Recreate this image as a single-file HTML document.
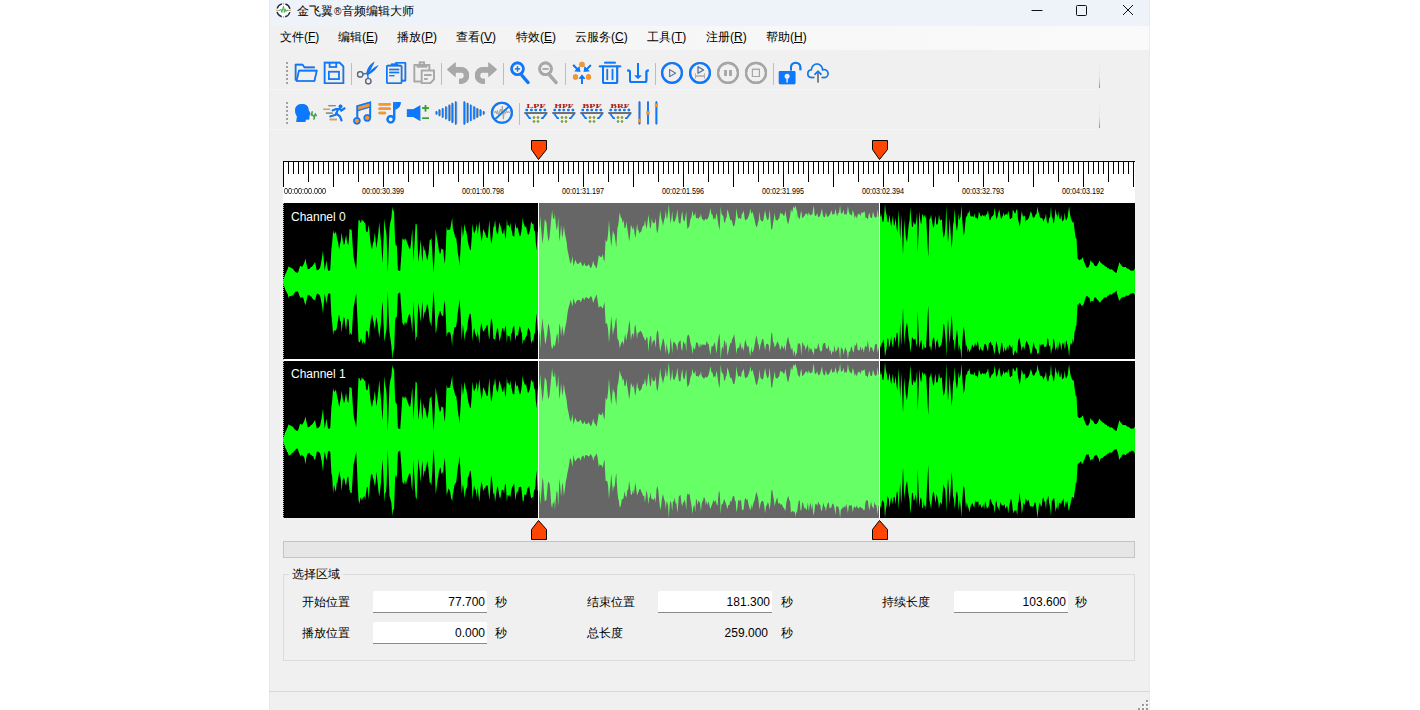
<!DOCTYPE html>
<html><head><meta charset="utf-8">
<style>
*{box-sizing:border-box;margin:0;padding:0}
html,body{width:1420px;height:710px;overflow:hidden;background:#fff;font-family:"Liberation Sans",sans-serif;color:#000}
.a{position:absolute}
#win{position:absolute;left:269px;top:0;width:881px;height:710px;background:#f0f0f0;overflow:hidden}
#title{position:absolute;left:269px;top:0;width:881px;height:26px;background:#eef3fa}
#menu{position:absolute;left:269px;top:26px;width:881px;height:24px;background:linear-gradient(to right,#f0f0f0,#f6f6f6 40%,#fafafa)}
.t12{font-size:12px;line-height:14px;white-space:nowrap}
.mi{position:absolute;top:30px;font-size:12px;line-height:14px;white-space:nowrap}
.mi u{text-decoration:underline;text-underline-offset:1px}
.rl{position:absolute;top:187px;font-size:9px;line-height:9px;white-space:nowrap;color:#000;transform-origin:0 0;transform:scaleX(0.8)}
.rl.c{transform:translateX(-50%) scaleX(0.8);transform-origin:50% 0}
.sep{position:absolute;width:1px;background:#c8c8c8}
.lbl{position:absolute;font-size:12px;line-height:14px;white-space:nowrap}
.inp{position:absolute;height:22px;background:#fff;border-bottom:1px solid #8a8a8a;font-size:12px;line-height:23px;text-align:right;padding-right:2px;border-radius:2px 2px 0 0}
svg{position:absolute;overflow:visible}
</style></head><body>
<div id="win"></div>
<div id="title"></div>
<div id="menu"></div>

<div class="a" style="left:269px;top:0;width:1px;height:26px;background:#e6eaf1"></div>
<div class="a" style="left:269px;top:26px;width:1px;height:684px;background:#e8e8e8"></div>
<div class="a" style="left:1149px;top:0;width:1px;height:26px;background:#e6eaf1"></div>
<div class="a" style="left:1149px;top:26px;width:1px;height:684px;background:#ececec"></div>
<!-- title bar -->
<svg class="a" style="left:275px;top:2px" width="17" height="17" viewBox="0 0 17 17">
  <circle cx="8.5" cy="8.35" r="6.6" fill="#fff" stroke="#2a2456" stroke-width="1.4" stroke-dasharray="6.87 3.5" stroke-dashoffset="8.62"/>
  <rect x="7.9" y="1" width="1.2" height="1.8" fill="#f7a040"/>
  <rect x="7.9" y="14" width="1.2" height="1.8" fill="#f7a040"/>
  <rect x="1.1" y="7.75" width="1.8" height="1.2" fill="#f7a040"/>
  <rect x="14.1" y="7.75" width="1.8" height="1.2" fill="#f7a040"/>
  <path d="M3.3,8.35H5.2L6,7.2L6.8,10.4L7.7,6.8L8.5,4.2L9.3,10.4L10.2,6.8L11,9.6L11.8,8.35H13.7" fill="none" stroke="#3cb04a" stroke-width="1" stroke-linejoin="round"/>
</svg>
<div class="a t12" style="left:297px;top:4px">金飞翼<span style="font-size:10px;margin:0 1px">®</span>音频编辑大师</div>
<svg style="left:1020px;top:0" width="130" height="26">
  <path d="M11.5,10.5H22.5" stroke="#111" stroke-width="1" fill="none"/>
  <rect x="56.5" y="5.5" width="10" height="10" rx="1" stroke="#111" stroke-width="1" fill="none"/>
  <path d="M103,5L113,15M113,5L103,15" stroke="#111" stroke-width="1" fill="none"/>
</svg>

<!-- menu -->
<div class="mi" style="left:280px">文件(<u>F</u>)</div>
<div class="mi" style="left:338px">编辑(<u>E</u>)</div>
<div class="mi" style="left:397px">播放(<u>P</u>)</div>
<div class="mi" style="left:456px">查看(<u>V</u>)</div>
<div class="mi" style="left:516px">特效(<u>E</u>)</div>
<div class="mi" style="left:575px">云服务(<u>C</u>)</div>
<div class="mi" style="left:647px">工具(<u>T</u>)</div>
<div class="mi" style="left:706px">注册(<u>R</u>)</div>
<div class="mi" style="left:766px">帮助(<u>H</u>)</div>

<!-- TOOLBAR -->
<svg style="left:0;top:0;filter:drop-shadow(0.6px 0.6px 0 rgba(90,80,70,0.55))" width="1420" height="140" viewBox="0 0 1420 140">
<defs>
  <g id="grip" fill="#a0a0a0"><rect x="286" y="0" width="2" height="2"/><rect x="286" y="4" width="2" height="2"/><rect x="286" y="8" width="2" height="2"/><rect x="286" y="12" width="2" height="2"/><rect x="286" y="16" width="2" height="2"/><rect x="286" y="20" width="2" height="2"/></g>
  <g id="filt">
    <g fill="#0a78ff"><circle cx="526.8" cy="110" r="1.35"/><circle cx="531.4" cy="110" r="1.35"/><circle cx="535.8" cy="110" r="1.35"/><circle cx="540.3" cy="110" r="1.35"/><circle cx="544.9" cy="110" r="1.35"/></g>
    <path d="M524.4,113H547.3" stroke="#707070" stroke-width="2"/>
    <path d="M526,113.4L529.5,118.3H531M546.4,113.4L542.7,118.3H541" stroke="#0a78ff" stroke-width="1.6" fill="none"/>
    <g fill="#7ea82a"><circle cx="534" cy="117.5" r="1.2"/><circle cx="538" cy="117.5" r="1.2"/><circle cx="534" cy="121.4" r="1.2"/><circle cx="538" cy="121.4" r="1.2"/></g>
  </g>
</defs>
<!-- row separators/lines -->
<linearGradient id="eg" x1="0" y1="0" x2="0" y2="1"><stop offset="0" stop-color="#f0f0f0"/><stop offset="0.6" stop-color="#e4e4e4"/><stop offset="1" stop-color="#909090"/></linearGradient>
<path d="M269,89.5H1098M269,129.5H1098" stroke="#f4f4f4" stroke-width="1"/>
<rect x="1099" y="61" width="1" height="27" fill="url(#eg)"/><rect x="1099" y="101" width="1" height="27" fill="url(#eg)"/>
<use href="#grip" y="62"/>
<use href="#grip" y="102"/>
<!-- separators row1 -->
<g stroke="#bdbdbd" stroke-width="1">
  <path d="M351.5,63V85M441.5,63V85M503.5,63V85M565.5,63V85M655.5,63V85M773.5,63V85M519.5,103V125"/>
</g>
<!-- folder -->
<g fill="none" stroke="#0a78ff" stroke-width="1.6" stroke-linejoin="round">
  <path d="M295.6,80.6V64.6H302.4L304.6,67.4H314.8"/>
  <path d="M298.9,70.6H316.8L314.4,81H296.6Z"/>
</g>
<!-- save -->
<g fill="none" stroke="#0a78ff" stroke-width="1.6" stroke-linejoin="miter">
  <path d="M324.6,62.6H339.6L343.4,66.4V83.2H324.6Z"/>
  <path d="M329.6,63V67H336.3V63"/>
  <rect x="328.8" y="71.7" width="10.2" height="7.4"/>
</g>
<!-- scissors -->
<g fill="none" stroke="#0a78ff" stroke-width="1.2">
  <circle cx="360.2" cy="74.4" r="2.7" stroke="#5a6a80"/>
  <circle cx="368.3" cy="81.2" r="2.7" stroke="#5a6a80"/>
  <path d="M362.9,73.9L367.4,73.4M368.1,78.5L367.6,74"/>
</g>
<path d="M366.4,74.2C366.6,69 369.5,64.5 374.6,61.4C372.8,65.5 370.5,70 368.2,73.9Z" fill="#0a78ff"/>
<path d="M367.2,74.2C370,71 373.6,67.6 378.6,65C376.4,68.8 372.8,72.4 368.4,74.8Z" fill="#0a78ff"/>
<!-- copy -->
<g fill="none" stroke="#0a78ff" stroke-width="1.6" stroke-linejoin="round">
  <path d="M396,65V62.8H405.4V80.6H402"/>
  <rect x="386.8" y="65.6" width="14.8" height="17.6" rx="1"/>
  <path d="M391.6,65.4V64.4H397.4V65.4"/>
  <path d="M389.2,69.5H399.2M389.2,72.5H399.2M389.2,75.6H394.4" stroke-width="1.3"/>
</g>
<!-- paste gray -->
<g fill="none" stroke="#a8a8a8" stroke-width="1.5">
  <path d="M421.4,81.6H414.4V65H429.4V70.4"/>
  <rect x="419.6" y="62.4" width="4.6" height="2.6"/>
  <path d="M416.8,66.3H427.2" stroke-width="2.2"/>
  <path d="M421.6,70.6H434V79.4L430.2,83.2H421.6Z"/>
  <path d="M424.2,75.1H431.4M424.2,79H427.6" stroke-width="1.6"/>
</g>
<!-- undo/redo -->
<path d="M447,69.5L455.5,62.3V67.2H461.5A7.6,8.25 0 0 1 461.5,83.7H459.1V78.7H461.4A2.5,3.15 0 0 0 461.4,72.4H455.5V76.9Z" fill="#a8a8a8"/>
<path d="M497,69.5L488.5,62.3V67.2H482.5A7.6,8.25 0 0 0 482.5,83.7H484.9V78.7H482.6A2.5,3.15 0 0 1 482.6,72.4H488.5V76.9Z" fill="#a8a8a8"/>
<!-- zoom in/out -->
<g fill="none" stroke="#0a78ff">
  <circle cx="517.5" cy="68.8" r="5.9" stroke-width="2.6"/>
  <path d="M522,75.6L528,82.6" stroke-width="3.1" stroke-linecap="round"/>
  <path d="M514.9,68.8H520.1M517.5,66.2V71.4" stroke-width="1.3"/>
</g>
<g fill="none" stroke="#a8a8a8">
  <circle cx="545.5" cy="68.8" r="5.9" stroke-width="2.6"/>
  <path d="M550,75.6L556,82.6" stroke-width="3.1" stroke-linecap="round"/>
  <path d="M542.6,68.8H548.4" stroke-width="1.6"/>
</g>
<!-- merge -->
<g fill="#f7952e"><circle cx="582" cy="64.4" r="2.6"/><circle cx="575.5" cy="76.9" r="2.6"/><circle cx="588.5" cy="76.9" r="2.6"/></g>
<g stroke="#0a78ff" stroke-width="1.9" fill="none">
  <path d="M573.2,65L577.6,69.4"/>
  <path d="M590.8,65.2L586.4,69.6"/>
  <path d="M582,83.9V77.5"/>
</g>
<g fill="#0a78ff">
  <path d="M580.4,71.8L574.4,71.2L579.4,66.2Z"/>
  <path d="M583.6,71.8L584.6,66.2L589.6,71.2Z"/>
  <path d="M582,74.4L585.4,78.8H578.6Z"/>
</g>
<!-- trash -->
<g fill="none" stroke="#0a78ff" stroke-linecap="round">
  <path d="M605,62.7H615" stroke-width="1.8"/>
  <path d="M599.6,66.3H620.4" stroke-width="1.8"/>
  <path d="M603,66.4V81.4Q603,83 604.6,83H615.6Q617.2,83 617.2,81.4V66.4" stroke-width="2"/>
  <path d="M607.3,69.5V79.4M612.5,69.5V79.4" stroke-width="1.6"/>
</g>
<!-- insert -->
<g fill="none" stroke="#0a78ff" stroke-width="2">
  <path d="M627.2,70.4H628.6Q630,70.4 630,72.2V80.2Q630,82.1 631.9,82.1H644.6Q646.4,82.1 646.4,80.2V72.2Q646.4,70.4 648,70.4H648.8"/>
  <path d="M638,63V76"/>
</g>
<path d="M634.3,75.4H641.7L638,79Z" fill="#0a78ff"/>
<!-- play circles -->
<g fill="none" stroke="#0a78ff" stroke-width="2.2">
  <circle cx="672" cy="72.9" r="9.9"/>
  <circle cx="700" cy="72.9" r="9.9"/>
</g>
<path d="M669.6,69.6V76.6L675.6,73.1Z" fill="none" stroke="#5a7cb0" stroke-width="1.05" stroke-linejoin="round"/>
<path d="M698,66.8V73.2L703.6,70Z" fill="none" stroke="#5a7cb0" stroke-width="1.05" stroke-linejoin="round"/>
<path d="M695.6,76H704.4M695.5,73.6V78.4M704.5,73.6V78.4" stroke="#b0b0b0" stroke-width="1"/>
<!-- pause/stop -->
<g fill="none" stroke="#a6a6a6" stroke-width="2.1">
  <circle cx="728" cy="72.9" r="10"/>
  <circle cx="756" cy="72.9" r="10"/>
</g>
<path d="M725.6,69.9V76M730.5,69.9V76" stroke="#a6a6a6" stroke-width="2.4"/>
<rect x="752.4" y="69.3" width="7" height="7.2" fill="none" stroke="#a6a6a6" stroke-width="1"/>
<!-- lock -->
<rect x="778.8" y="70.9" width="16.6" height="13.3" rx="1.2" fill="#0a78ff"/>
<path d="M791,70.5V67.4A4.7,4.7 0 0 1 800.4,67.4V70.2" fill="none" stroke="#0a78ff" stroke-width="2"/>
<circle cx="787.1" cy="76.3" r="2.5" fill="#f0f0f0"/>
<path d="M787.1,77V82.6" stroke="#f0f0f0" stroke-width="1.4"/>
<!-- cloud -->
<path d="M814.4,77.6H811A4,4 0 0 1 811.4,69.7A5.6,5.6 0 0 1 822.6,69.7A4,4 0 0 1 825.2,77.6H821.6" fill="none" stroke="#0a78ff" stroke-width="1.5"/>
<path d="M818,72.2V82.6" stroke="#707070" stroke-width="1.5"/>
<path d="M814.6,74.6L818,71.2L821.4,74.6" fill="none" stroke="#0a78ff" stroke-width="1.5"/>

<!-- ROW 2 -->
<!-- head -->
<path d="M301.8,104.1C297.6,104.1 295,107 295.1,110.6C295.2,113 295.8,114.6 297,116.4L296.3,121.9H305.2L306,119.6H309.2L309.4,115.7L310.4,113.2L308.6,110.3C308.8,106.8 306.4,104.1 301.8,104.1Z" fill="#0a78ff"/>
<path d="M312.4,111.4L311.1,115.5M313.7,119.5L315.3,114.1L316.6,115.8M311.5,114L314.5,117" stroke="#3caa3c" stroke-width="1.3" fill="none"/>
<!-- runner -->
<g stroke-width="1.3">
  <path d="M328.4,105.6H335.6M325.9,113.2H332.7" stroke="#8a8a8a"/>
  <path d="M323,109.4H330.1M329.7,119.5H336.9" stroke="#f7952e"/>
</g>
<circle cx="340.5" cy="106.4" r="1.9" fill="#0a78ff"/>
<g fill="none" stroke="#0a78ff" stroke-width="2" stroke-linecap="round" stroke-linejoin="round">
  <path d="M332.7,110.4L336.5,108.9H340.2L341.2,110.6L344.5,108.4"/>
  <path d="M338,109.3L335.6,114.9L330.3,116.4"/>
  <path d="M336.2,113.6L339.8,116.2L341.5,120.4"/>
</g>
<!-- music note -->
<path d="M357.3,120V106.2L370.2,102.4V117.8" fill="none" stroke="#0a78ff" stroke-width="1.8"/>
<path d="M358.2,107L369.4,103.6V107L358.2,110.2Z" fill="#f7952e"/>
<path d="M357.6,110.6L370,107" stroke="#0a78ff" stroke-width="1.2"/>
<circle cx="356.9" cy="120.8" r="2.9" fill="#f7952e" stroke="#0a78ff" stroke-width="1.5"/>
<circle cx="367.2" cy="117.9" r="2.9" fill="#f7952e" stroke="#0a78ff" stroke-width="1.5"/>
<!-- note list -->
<path d="M379.6,104.3H389.6M379.6,108.8H389.6M379.6,113H385" stroke="#f7952e" stroke-width="2.4" stroke-linecap="round"/>
<path d="M394.2,102.2V119.5" stroke="#0a78ff" stroke-width="2.2"/>
<path d="M393.2,102H400.8C400.8,106 398.6,108.6 395.3,109.6V102Z" fill="#0a78ff"/>
<circle cx="390.7" cy="119.3" r="3.2" fill="none" stroke="#0a78ff" stroke-width="2.2"/>
<!-- volume -->
<path d="M406.9,109.2H413.4L420.3,105.2V121L413.4,117H406.9Z" fill="#0a78ff"/>
<path d="M422.1,108.1H429M425.5,105V111.4M422.1,118.3H429" stroke="#2da52d" stroke-width="1.6"/>
<!-- fade in -->
<g stroke="#b8a898" stroke-width="0.8">
  <path d="M437.4,111.8V114M440.4,110.1V115.4M443.6,108.7V117.1M446.9,107V118.8M450.3,105.3V120.5M453.3,103.6V122.2M456.7,102.1V123.9"/>
  <path d="M465.3,102.1V123.9M468.5,103.6V122.2M471.7,105.3V120.5M475.1,107V118.8M478.2,108.7V117.1M481.4,110.1V115.4M484.6,111.8V114"/>
</g>
<g stroke="#0a78ff" stroke-width="1.6" stroke-linecap="round">
  <path d="M436.4,111.8V114M439.4,110.1V115.4M442.6,108.7V117.1M445.9,107V118.8M449.3,105.3V120.5M452.3,103.6V122.2M455.7,102.1V123.9"/>
  <path d="M464.3,102.1V123.9M467.5,103.6V122.2M470.7,105.3V120.5M474.1,107V118.8M477.2,108.7V117.1M480.4,110.1V115.4M483.6,111.8V114"/>
</g>
<!-- noise circle -->
<path d="M494,113L495.5,111L496.5,114L497.5,110.5L498.5,115L499.5,112L500.5,109L501.5,113L502.4,106.2L503,114L503.4,119.1L504.2,111L505.5,113.5L506.5,110.5L507.5,113L508.5,111.5L510,112.8" fill="none" stroke="#9c9c9c" stroke-width="0.6"/>
<circle cx="501.9" cy="112.8" r="10" fill="none" stroke="#0a78ff" stroke-width="2.1"/>
<path d="M495.2,119.1L509.1,106.3" stroke="#0a78ff" stroke-width="1.6"/>
<!-- filters -->
<g font-family="Liberation Serif" font-weight="bold" font-size="5.6">
  <text x="526.6" y="108" fill="#b82020" textLength="19" lengthAdjust="spacingAndGlyphs">LPF</text>
  <text x="554.6" y="108" fill="#b82020" textLength="19" lengthAdjust="spacingAndGlyphs">HPF</text>
  <text x="582.6" y="108" fill="#b82020" textLength="19" lengthAdjust="spacingAndGlyphs">BPF</text>
  <text x="610.6" y="108" fill="#b82020" textLength="19" lengthAdjust="spacingAndGlyphs">BRF</text>
</g>
<use href="#filt"/>
<use href="#filt" x="28"/>
<use href="#filt" x="56"/>
<use href="#filt" x="84"/>
<!-- eq -->
<path d="M639.5,102.2V123.6M648,102.2V123.6M656.4,102.2V123.6" stroke="#0a78ff" stroke-width="1.8" stroke-linecap="round"/>
<g fill="#f7952e"><rect x="638" y="118.8" width="3" height="3.4"/><rect x="646.5" y="111.2" width="3" height="3.4"/><rect x="654.9" y="103.6" width="3" height="3.4"/></g>
</svg>



<!-- ruler -->
<div class="a" style="left:283px;top:161px;width:852px;height:42px;background:#fff"></div>
<svg style="left:0;top:0" width="1420" height="710">
  <path d="M283,161.5H1135" stroke="#000" stroke-width="1"/>
  <path d="M283.5,161V187M288.5,161V174M293.5,161V174M298.5,161V174M303.5,161V174M308.5,161V182M313.5,161V174M318.5,161V174M323.5,161V174M328.5,161V174M333.5,161V187M338.5,161V174M343.5,161V174M348.5,161V174M353.5,161V174M358.5,161V182M363.5,161V174M368.5,161V174M373.5,161V174M378.5,161V174M383.5,161V187M388.5,161V174M393.5,161V174M398.5,161V174M403.5,161V174M408.5,161V182M413.5,161V174M418.5,161V174M423.5,161V174M428.5,161V174M433.5,161V187M438.5,161V174M443.5,161V174M448.5,161V174M453.5,161V174M458.5,161V182M463.5,161V174M468.5,161V174M473.5,161V174M478.5,161V174M483.5,161V187M488.5,161V174M493.5,161V174M498.5,161V174M503.5,161V174M508.5,161V182M513.5,161V174M518.5,161V174M523.5,161V174M528.5,161V174M533.5,161V187M538.5,161V174M543.5,161V174M548.5,161V174M553.5,161V174M558.5,161V182M563.5,161V174M568.5,161V174M573.5,161V174M578.5,161V174M583.5,161V187M588.5,161V174M593.5,161V174M598.5,161V174M603.5,161V174M608.5,161V182M613.5,161V174M618.5,161V174M623.5,161V174M628.5,161V174M633.5,161V187M638.5,161V174M643.5,161V174M648.5,161V174M653.5,161V174M658.5,161V182M663.5,161V174M668.5,161V174M673.5,161V174M678.5,161V174M683.5,161V187M688.5,161V174M693.5,161V174M698.5,161V174M703.5,161V174M708.5,161V182M713.5,161V174M718.5,161V174M723.5,161V174M728.5,161V174M733.5,161V187M738.5,161V174M743.5,161V174M748.5,161V174M753.5,161V174M758.5,161V182M763.5,161V174M768.5,161V174M773.5,161V174M778.5,161V174M783.5,161V187M788.5,161V174M793.5,161V174M798.5,161V174M803.5,161V174M808.5,161V182M813.5,161V174M818.5,161V174M823.5,161V174M828.5,161V174M833.5,161V187M838.5,161V174M843.5,161V174M848.5,161V174M853.5,161V174M858.5,161V182M863.5,161V174M868.5,161V174M873.5,161V174M878.5,161V174M883.5,161V187M888.5,161V174M893.5,161V174M898.5,161V174M903.5,161V174M908.5,161V182M913.5,161V174M918.5,161V174M923.5,161V174M928.5,161V174M933.5,161V187M938.5,161V174M943.5,161V174M948.5,161V174M953.5,161V174M958.5,161V182M963.5,161V174M968.5,161V174M973.5,161V174M978.5,161V174M983.5,161V187M988.5,161V174M993.5,161V174M998.5,161V174M1003.5,161V174M1008.5,161V182M1013.5,161V174M1018.5,161V174M1023.5,161V174M1028.5,161V174M1033.5,161V187M1038.5,161V174M1043.5,161V174M1048.5,161V174M1053.5,161V174M1058.5,161V182M1063.5,161V174M1068.5,161V174M1073.5,161V174M1078.5,161V174M1083.5,161V187M1088.5,161V174M1093.5,161V174M1098.5,161V174M1103.5,161V174M1108.5,161V182M1113.5,161V174M1118.5,161V174M1123.5,161V174M1128.5,161V174M1133.5,161V187" stroke="#000" stroke-width="1" fill="none"/>
</svg>
<div class="rl" style="left:284px">00:00:00.000</div>
<div class="rl c" style="left:383px">00:00:30.399</div>
<div class="rl c" style="left:483px">00:01:00.798</div>
<div class="rl c" style="left:583px">00:01:31.197</div>
<div class="rl c" style="left:683px">00:02:01.596</div>
<div class="rl c" style="left:783px">00:02:31.995</div>
<div class="rl c" style="left:883px">00:03:02.394</div>
<div class="rl c" style="left:983px">00:03:32.793</div>
<div class="rl c" style="left:1083px">00:04:03.192</div>

<!-- markers top -->
<svg style="left:0;top:0" width="1420" height="710">
  <path d="M531.5,140.5H546.5V149.5L538.5,159.5L531.5,149.5Z" fill="#ff4500" stroke="#000" stroke-width="1"/>
  <path d="M872.5,140.5H887.5V149.5L879.5,159.5L872.5,149.5Z" fill="#ff4500" stroke="#000" stroke-width="1"/>
  <path d="M531.5,539.5H546.5V529.5L538.5,520.5L531.5,529.5Z" fill="#ff4500" stroke="#000" stroke-width="1"/>
  <path d="M872.5,539.5H887.5V529.5L879.5,520.5L872.5,529.5Z" fill="#ff4500" stroke="#000" stroke-width="1"/>
</svg>

<!-- waveform -->
<svg style="left:0;top:0" width="1420" height="710">
  <defs>
    <clipPath id="cin"><rect x="539" y="0" width="340" height="710"/></clipPath>
    <clipPath id="cl"><rect x="283" y="0" width="255" height="710"/></clipPath>
    <clipPath id="cr"><rect x="880" y="0" width="255" height="710"/></clipPath>
    <clipPath id="c0"><rect x="283" y="203" width="852" height="156"/></clipPath>
    <clipPath id="c1"><rect x="283" y="361" width="852" height="157"/></clipPath>
    <path id="w0" d="M283,282.0 L283.0,281.0 L283.8,278.8 L284.5,276.6 L285.3,274.1 L286.1,272.8 L287.0,270.5 L287.8,268.7 L288.6,266.2 L289.5,267.3 L290.4,267.3 L291.3,268.1 L292.2,268.7 L293.1,268.5 L293.9,270.4 L294.6,270.9 L295.4,272.0 L296.1,272.5 L296.9,272.7 L297.6,273.0 L298.4,271.4 L299.1,269.1 L299.9,266.2 L300.8,265.9 L301.6,266.7 L302.4,266.4 L303.3,265.0 L304.4,262.6 L305.5,258.4 L306.3,263.0 L307.0,266.0 L307.8,269.6 L308.7,268.9 L309.6,268.7 L310.5,267.6 L311.4,267.1 L312.3,266.2 L313.2,265.1 L314.2,263.4 L315.1,262.0 L316.0,266.8 L316.8,270.5 L317.6,270.1 L318.5,269.7 L319.4,268.7 L320.2,267.4 L321.1,262.7 L322.1,257.0 L323.0,250.5 L323.9,261.5 L324.7,270.5 L325.5,266.1 L326.4,260.6 L327.2,265.9 L328.1,270.5 L329.2,270.9 L330.3,269.6 L331.4,249.3 L332.2,242.7 L333.1,230.2 L334.0,233.6 L335.0,233.5 L335.9,231.3 L336.7,236.2 L337.4,239.8 L338.2,243.0 L338.8,246.9 L339.3,249.3 L340.1,243.9 L340.8,240.4 L341.6,232.4 L342.7,239.9 L343.8,245.0 L344.6,244.0 L345.3,239.3 L346.1,234.7 L347.2,242.7 L348.3,245.0 L348.9,239.7 L349.5,229.0 L350.6,229.5 L351.7,230.0 L352.5,243.1 L353.4,255.0 L354.3,261.3 L355.3,265.3 L356.2,269.6 L357.0,255.1 L357.7,237.8 L358.5,220.0 L359.4,220.1 L360.2,222.3 L361.0,222.7 L361.9,219.0 L362.7,221.0 L363.5,221.0 L364.4,222.9 L365.2,222.3 L366.0,231.0 L366.9,232.4 L367.8,231.3 L368.6,224.5 L369.4,231.8 L370.1,238.9 L370.9,245.0 L371.4,247.4 L372.0,249.3 L372.9,243.8 L373.9,240.5 L374.8,232.4 L375.6,240.8 L376.5,248.2 L377.4,241.1 L378.4,232.3 L379.3,222.0 L380.1,232.4 L381.0,241.4 L381.9,253.7 L382.7,263.0 L383.5,240.9 L384.4,218.0 L385.1,226.5 L385.9,230.3 L386.6,235.8 L387.2,255.2 L387.8,273.0 L388.6,251.0 L389.5,228.0 L390.4,222.0 L391.4,218.3 L392.3,206.5 L393.1,211.9 L394.0,209.0 L394.6,226.7 L395.1,242.0 L396.0,245.9 L396.8,245.0 L397.9,270.0 L398.7,270.5 L399.4,271.0 L400.2,271.0 L401.3,256.1 L402.4,238.0 L403.2,240.0 L404.1,238.3 L404.9,241.0 L405.8,238.0 L406.9,242.1 L408.0,245.0 L409.0,247.8 L410.0,249.3 L410.8,244.7 L411.5,236.8 L412.3,229.0 L413.4,262.0 L414.1,249.8 L414.9,236.5 L415.6,223.4 L416.2,224.3 L416.8,224.5 L417.6,244.8 L418.4,262.0 L419.2,254.9 L419.9,248.3 L420.7,239.2 L421.5,251.4 L422.4,262.0 L422.9,254.4 L423.5,245.0 L424.4,250.0 L425.2,250.5 L426.0,254.8 L426.7,258.2 L427.5,260.6 L428.6,252.4 L429.7,240.3 L430.5,239.7 L431.4,238.0 L432.2,250.0 L432.9,262.6 L433.7,273.0 L434.7,252.8 L435.7,229.0 L436.5,235.2 L437.4,240.2 L438.2,245.0 L439.0,251.2 L439.9,254.0 L440.7,253.1 L441.5,248.2 L442.4,249.2 L443.2,249.3 L444.0,258.3 L444.9,264.0 L445.8,247.8 L446.6,227.0 L447.5,230.0 L448.3,230.1 L449.1,229.6 L450.0,230.0 L451.1,224.1 L452.2,217.8 L452.8,227.9 L453.4,230.2 L454.3,233.6 L455.3,237.7 L456.2,238.0 L457.1,245.4 L457.9,253.3 L458.8,259.2 L459.6,265.0 L460.7,245.5 L461.8,224.5 L462.9,237.0 L463.8,230.8 L464.6,223.4 L465.5,230.1 L466.3,231.3 L467.1,236.1 L467.8,241.1 L468.6,245.0 L469.7,249.1 L470.8,250.5 L471.6,239.6 L472.5,223.4 L473.4,230.8 L474.2,233.6 L475.0,231.2 L475.7,230.3 L476.5,223.4 L477.1,229.8 L477.6,234.7 L478.5,228.0 L479.3,221.2 L480.4,232.3 L481.5,241.4 L482.4,236.7 L483.2,229.0 L484.1,231.0 L485.0,233.2 L485.9,235.6 L486.8,238.0 L487.7,238.0 L488.5,229.5 L489.4,220.0 L490.2,233.3 L491.1,244.0 L491.9,241.1 L492.6,236.1 L493.4,227.0 L494.2,226.2 L495.1,220.0 L496.2,230.0 L497.3,234.7 L498.1,232.7 L498.8,227.0 L499.6,222.3 L500.5,226.2 L501.5,229.9 L502.4,233.6 L503.2,234.1 L504.1,228.0 L505.0,236.0 L505.8,239.2 L506.9,219.0 L507.6,225.7 L508.4,224.4 L509.1,227.0 L509.7,227.2 L510.3,222.3 L511.1,228.7 L511.9,231.3 L512.7,235.7 L513.4,236.1 L514.2,237.0 L515.3,222.3 L516.2,228.6 L517.2,227.1 L518.1,229.0 L518.9,233.3 L519.6,236.2 L520.4,236.0 L521.1,233.2 L521.9,226.9 L522.6,217.8 L523.5,222.8 L524.3,225.1 L525.1,227.5 L526.0,225.7 L526.8,230.0 L527.5,234.1 L528.3,234.7 L529.2,233.5 L530.2,229.1 L531.1,221.2 L532.2,224.0 L533.3,223.4 L534.1,230.4 L535.0,231.3 L535.9,243.4 L536.7,250.5 L537.6,232.0 L538.4,230.0 L539.1,229.2 L539.7,224.7 L540.3,215.5 L541.0,227.5 L541.8,235.8 L542.5,244.0 L543.3,237.6 L544.0,229.7 L544.8,219.0 L545.6,221.0 L546.4,222.3 L547.2,231.1 L547.9,238.3 L548.7,241.4 L549.6,236.5 L550.4,228.6 L551.2,219.6 L552.1,210.0 L553.0,218.0 L553.8,219.0 L554.3,218.8 L554.9,213.3 L555.8,223.6 L556.6,230.2 L557.5,226.9 L558.3,216.7 L558.8,229.4 L559.4,241.4 L560.2,235.5 L561.1,224.5 L561.7,231.4 L562.2,238.1 L563.0,234.0 L563.9,225.7 L564.8,233.0 L565.8,237.7 L566.7,242.6 L567.5,249.9 L568.4,254.0 L569.2,258.2 L569.9,261.6 L570.7,264.0 L571.5,261.4 L572.4,256.0 L573.0,261.5 L573.5,266.2 L574.4,262.9 L575.2,259.5 L576.3,262.2 L577.4,264.0 L578.2,264.3 L579.1,263.1 L579.9,262.5 L580.8,261.7 L581.6,264.4 L582.3,265.5 L583.1,266.2 L583.7,265.0 L584.2,262.8 L585.3,265.6 L586.4,266.2 L587.2,265.8 L587.9,265.5 L588.7,264.0 L589.8,266.5 L590.9,268.5 L591.7,266.4 L592.4,264.3 L593.2,260.6 L594.0,263.7 L594.7,265.4 L595.5,266.2 L596.0,267.7 L596.6,268.5 L597.7,262.6 L598.8,255.0 L599.6,256.3 L600.3,256.7 L601.1,257.2 L602.0,256.5 L602.8,254.0 L603.6,259.3 L604.5,261.7 L605.0,252.3 L605.6,239.2 L606.5,241.9 L607.3,240.3 L608.1,233.6 L609.0,220.0 L609.7,230.0 L610.5,238.5 L611.2,247.0 L612.0,240.0 L612.9,230.2 L613.8,233.4 L614.6,234.7 L615.5,241.5 L616.3,247.0 L616.8,238.8 L617.4,228.0 L618.2,225.3 L618.9,219.7 L619.7,212.2 L620.8,217.1 L621.9,219.0 L622.8,223.2 L623.6,220.1 L624.5,228.0 L625.3,228.0 L625.8,226.4 L626.4,221.2 L627.3,228.2 L628.3,234.8 L629.2,241.4 L630.0,235.9 L630.9,224.5 L631.8,226.9 L632.6,229.0 L633.2,230.1 L633.8,225.7 L634.6,233.9 L635.4,238.0 L636.2,231.8 L637.1,223.4 L637.9,229.9 L638.6,230.3 L639.4,233.6 L640.3,232.2 L641.3,231.5 L642.2,228.0 L643.1,225.4 L644.1,226.1 L645.0,220.0 L645.9,225.5 L646.7,229.0 L647.5,222.3 L648.4,214.4 L649.1,219.5 L649.9,226.7 L650.6,229.0 L651.2,225.2 L651.8,217.8 L652.5,222.1 L653.3,223.6 L654.0,222.3 L654.9,223.6 L655.7,217.8 L656.5,229.5 L657.4,233.6 L658.3,228.4 L659.3,218.8 L660.2,210.0 L661.1,217.5 L662.1,221.2 L663.0,225.7 L664.0,220.5 L664.9,217.4 L665.9,210.0 L666.5,217.8 L667.1,218.9 L668.0,212.5 L668.8,204.3 L669.7,215.1 L670.5,223.4 L671.4,218.8 L672.2,211.0 L673.0,219.9 L673.9,222.3 L674.7,221.3 L675.6,218.7 L676.4,216.3 L677.3,209.3 L678.0,215.9 L678.8,222.2 L679.5,223.4 L680.5,223.3 L681.4,215.6 L682.3,211.0 L683.1,218.8 L683.8,221.0 L684.6,221.2 L685.4,216.7 L686.3,211.0 L686.8,222.0 L687.4,229.1 L688.4,227.8 L689.4,225.5 L690.4,219.6 L691.5,216.9 L692.5,210.5 L693.4,215.4 L694.4,215.5 L695.3,212.2 L696.0,218.5 L696.8,218.1 L697.5,217.8 L698.4,219.6 L699.2,216.5 L700.1,217.8 L700.9,213.3 L701.9,218.7 L702.9,219.3 L703.9,221.1 L704.9,219.5 L705.8,218.6 L706.7,219.9 L707.7,218.5 L708.6,216.8 L709.6,212.8 L710.5,208.2 L711.5,214.6 L712.5,214.5 L713.5,219.6 L714.4,217.8 L715.2,220.0 L715.9,216.1 L716.7,212.7 L717.6,218.9 L718.6,226.1 L719.5,230.2 L720.1,220.8 L720.6,206.5 L721.5,213.6 L722.4,215.2 L723.3,216.1 L724.2,222.7 L725.1,222.3 L725.9,218.3 L726.6,217.5 L727.4,209.3 L728.4,212.6 L729.3,215.8 L730.3,220.2 L731.3,219.6 L732.2,222.0 L733.2,225.9 L734.2,226.2 L734.9,223.4 L735.7,218.2 L736.4,208.2 L737.3,214.8 L738.3,219.1 L739.2,217.8 L740.1,218.6 L741.0,219.3 L741.9,213.8 L742.8,213.0 L743.7,210.5 L744.6,218.0 L745.4,220.6 L746.4,219.4 L747.4,219.0 L748.5,216.2 L749.5,213.3 L750.5,208.2 L751.2,213.6 L752.0,213.3 L752.7,211.6 L753.6,216.0 L754.5,219.2 L755.4,224.0 L756.3,227.0 L757.2,226.2 L758.0,222.2 L758.7,220.4 L759.5,211.6 L760.4,219.5 L761.4,220.7 L762.3,221.7 L763.3,220.4 L764.2,214.8 L765.1,209.9 L766.1,216.0 L767.0,219.3 L767.9,220.6 L768.8,217.8 L769.6,209.3 L770.5,219.6 L771.3,229.6 L772.2,229.2 L773.0,223.4 L773.9,218.8 L774.7,212.7 L775.6,220.1 L776.4,220.0 L777.3,221.0 L778.2,219.1 L779.1,218.5 L780.0,214.0 L780.9,212.2 L781.8,214.5 L782.7,213.5 L783.6,215.9 L784.5,215.4 L785.4,210.5 L786.3,216.4 L787.3,221.9 L788.2,224.5 L789.2,219.8 L790.1,216.1 L791.0,208.8 L791.8,212.1 L792.5,211.6 L793.3,206.0 L794.0,208.3 L794.8,207.3 L795.5,205.4 L796.3,209.2 L797.0,211.1 L797.9,217.3 L798.8,217.6 L799.7,219.6 L800.5,213.6 L801.4,210.7 L802.2,217.9 L803.0,217.8 L803.8,216.4 L804.6,215.8 L805.4,213.4 L806.2,214.3 L807.0,213.0 L807.9,215.9 L808.8,212.0 L809.7,214.4 L810.6,215.4 L811.5,214.5 L812.3,214.5 L813.1,208.9 L813.8,205.2 L814.6,214.4 L815.4,216.3 L816.3,215.2 L817.2,212.9 L818.3,217.3 L819.3,216.9 L820.2,215.2 L821.1,212.1 L822.0,208.2 L822.7,214.0 L823.5,216.6 L824.2,217.6 L825.1,216.7 L825.9,212.1 L826.8,215.5 L827.8,217.3 L828.7,216.1 L829.6,214.8 L830.5,213.0 L831.4,209.9 L832.4,215.0 L833.5,213.8 L834.5,214.5 L835.5,208.8 L836.3,213.1 L837.2,216.2 L838.0,213.6 L839.1,212.5 L840.1,205.2 L841.0,213.7 L841.8,213.5 L842.7,212.7 L843.6,209.6 L844.4,215.2 L845.2,213.4 L846.1,215.0 L847.0,213.2 L847.9,206.1 L848.9,211.9 L850.0,214.4 L850.9,214.4 L851.8,216.0 L852.7,209.9 L853.7,212.7 L854.8,218.2 L855.8,215.2 L856.8,218.8 L857.7,214.7 L858.7,213.5 L859.6,214.1 L860.6,216.0 L861.6,212.0 L862.6,213.1 L863.7,212.1 L864.7,211.4 L865.5,217.6 L866.2,217.7 L867.0,217.9 L867.8,219.7 L868.6,214.9 L869.4,212.5 L870.3,217.2 L871.1,218.1 L872.0,218.1 L872.9,211.8 L873.7,213.8 L874.4,216.5 L875.2,217.5 L876.0,217.9 L876.8,216.3 L877.6,209.1 L878.6,217.2 L879.6,216.0 L880.5,216.7 L880.8,212.8 L881.7,216.5 L882.5,221.4 L883.3,222.3 L884.1,216.4 L885.0,204.0 L885.8,211.9 L886.7,215.5 L887.5,221.9 L888.4,222.3 L888.9,219.2 L889.5,214.4 L890.3,220.9 L891.2,226.8 L892.0,221.6 L892.9,215.5 L893.4,220.8 L894.0,225.7 L894.9,224.1 L895.7,217.8 L896.5,227.2 L897.4,232.4 L897.9,223.6 L898.5,209.9 L899.4,225.1 L900.2,239.2 L900.8,227.5 L901.3,214.4 L902.2,235.4 L903.0,255.0 L903.6,239.6 L904.1,218.9 L905.1,230.6 L906.0,237.8 L907.0,242.6 L907.8,234.0 L908.7,225.1 L909.5,220.4 L910.3,207.1 L911.2,219.0 L912.0,226.8 L912.9,227.1 L913.7,221.2 L914.6,224.2 L915.4,224.5 L916.3,220.4 L917.1,212.2 L917.7,252.7 L918.5,233.7 L919.4,211.0 L920.2,219.7 L921.0,224.5 L921.6,222.1 L922.2,214.4 L922.9,214.5 L923.7,217.7 L924.4,214.4 L925.2,218.4 L926.0,214.4 L926.8,229.4 L927.5,244.2 L928.3,257.2 L928.8,240.3 L929.4,218.9 L930.2,218.5 L931.1,214.4 L931.8,219.8 L932.6,224.1 L933.3,227.9 L934.1,225.9 L934.8,219.7 L935.6,215.5 L936.1,223.9 L936.7,224.5 L937.5,224.6 L938.2,221.0 L939.0,214.4 L939.9,219.9 L940.8,220.3 L941.8,218.9 L942.6,230.0 L943.5,238.1 L944.3,236.1 L945.2,230.2 L945.7,220.1 L946.3,205.4 L947.1,228.0 L948.0,242.6 L948.8,233.1 L949.7,217.8 L950.7,233.9 L951.7,248.2 L952.4,239.8 L953.0,225.7 L953.9,220.6 L954.7,208.8 L955.5,219.9 L956.2,227.1 L957.0,231.3 L957.8,224.0 L958.7,213.3 L959.2,220.2 L959.8,218.9 L960.6,216.5 L961.5,205.4 L962.2,218.8 L963.0,228.7 L963.7,235.8 L964.5,231.9 L965.2,224.0 L966.0,215.5 L966.8,217.6 L967.7,213.1 L968.5,213.0 L969.4,209.9 L970.2,215.5 L971.1,216.7 L971.9,215.9 L972.8,216.6 L973.6,217.2 L974.4,213.3 L975.2,217.7 L975.9,217.4 L976.7,217.8 L977.4,220.1 L978.2,216.8 L978.9,211.6 L979.8,213.9 L980.6,216.2 L981.5,216.4 L982.3,214.4 L983.3,216.2 L984.2,214.8 L985.1,217.0 L986.1,214.6 L987.0,214.2 L988.0,209.9 L988.9,216.6 L989.8,220.4 L990.8,218.9 L991.8,216.2 L992.7,216.2 L993.7,214.2 L994.7,207.7 L995.6,214.5 L996.4,218.9 L997.3,217.6 L998.3,212.8 L999.2,209.3 L1000.0,213.5 L1000.7,217.5 L1001.5,218.9 L1002.2,217.1 L1003.0,215.6 L1003.7,212.2 L1004.6,216.3 L1005.5,214.2 L1006.4,213.7 L1007.3,215.6 L1008.2,210.5 L1009.1,215.1 L1009.9,218.9 L1010.8,218.9 L1011.6,217.8 L1012.2,218.0 L1012.7,210.5 L1013.6,210.6 L1014.5,213.0 L1015.4,213.6 L1016.3,209.8 L1017.2,209.3 L1018.0,219.5 L1018.7,221.7 L1019.5,226.8 L1020.3,223.5 L1021.0,217.1 L1021.8,211.0 L1022.6,214.9 L1023.4,216.8 L1024.3,215.5 L1025.1,216.7 L1025.7,222.6 L1026.3,220.0 L1027.2,220.1 L1028.1,218.9 L1029.0,217.5 L1029.9,214.6 L1030.8,211.0 L1031.8,213.8 L1032.7,217.0 L1033.7,217.9 L1034.7,216.7 L1035.6,214.6 L1036.6,213.5 L1037.5,206.5 L1038.3,211.4 L1039.0,213.4 L1039.8,216.7 L1040.7,218.2 L1041.6,217.8 L1042.5,218.7 L1043.4,221.8 L1044.3,218.9 L1045.1,217.9 L1046.0,213.3 L1046.7,220.8 L1047.5,223.3 L1048.2,223.4 L1049.2,218.0 L1050.1,217.0 L1051.0,206.5 L1051.8,216.8 L1052.6,218.1 L1053.4,223.4 L1054.1,222.6 L1054.9,215.7 L1055.6,208.8 L1056.5,214.5 L1057.3,215.5 L1057.9,218.0 L1058.4,211.0 L1059.0,216.1 L1059.6,218.9 L1060.4,219.1 L1061.3,214.4 L1062.0,220.6 L1062.8,221.4 L1063.5,220.0 L1064.1,218.3 L1064.6,212.2 L1065.4,219.0 L1066.1,220.4 L1066.9,218.9 L1067.6,217.6 L1068.4,211.2 L1069.1,206.5 L1070.1,214.5 L1071.0,218.4 L1072.0,221.2 L1072.8,222.6 L1073.7,222.3 L1074.5,229.3 L1075.3,235.8 L1075.9,238.6 L1076.5,238.1 L1077.0,248.5 L1077.6,258.3 L1078.5,259.4 L1079.5,260.2 L1080.4,259.5 L1081.2,259.5 L1081.9,258.4 L1082.7,257.2 L1083.7,260.7 L1084.6,262.9 L1085.6,265.8 L1086.6,267.4 L1087.4,267.5 L1088.1,267.7 L1088.9,266.2 L1089.7,264.4 L1090.5,260.0 L1091.5,262.1 L1092.4,262.4 L1093.4,263.3 L1094.3,265.3 L1095.2,266.1 L1096.2,266.2 L1097.0,265.6 L1097.9,263.9 L1098.7,262.4 L1099.6,260.6 L1100.5,262.5 L1101.4,263.2 L1102.3,264.1 L1103.2,265.0 L1104.1,265.1 L1105.0,266.5 L1105.9,266.4 L1106.8,267.1 L1107.7,268.4 L1108.6,267.9 L1109.4,269.2 L1110.3,269.6 L1111.1,269.2 L1112.0,269.6 L1112.9,270.3 L1113.8,271.2 L1114.7,271.9 L1115.6,272.7 L1116.5,273.0 L1117.4,269.5 L1118.3,266.5 L1119.3,262.3 L1120.2,263.7 L1121.1,265.0 L1122.1,266.2 L1122.9,267.1 L1123.8,267.1 L1124.6,267.3 L1125.5,266.8 L1126.3,267.7 L1127.2,268.4 L1128.0,268.7 L1128.8,269.0 L1129.7,269.7 L1130.6,270.4 L1131.5,270.8 L1132.5,270.5 L1133.4,270.7 L1134.1,269.7 L1134.9,268.5 L1135,282.0 L1134.9,294.8 L1134.1,294.0 L1133.4,293.1 L1132.5,292.9 L1131.5,293.4 L1130.6,293.5 L1129.7,294.4 L1128.8,295.5 L1128.0,295.5 L1127.2,296.0 L1126.3,295.3 L1125.5,296.3 L1124.6,297.1 L1123.8,296.5 L1122.9,297.4 L1122.1,296.8 L1121.1,298.2 L1120.2,299.6 L1119.3,300.7 L1118.3,297.9 L1117.4,294.9 L1116.5,290.6 L1115.6,291.5 L1114.7,292.4 L1113.8,292.8 L1112.9,293.1 L1112.0,294.7 L1111.1,294.6 L1110.3,294.2 L1109.4,294.6 L1108.6,295.8 L1107.7,295.5 L1106.8,297.2 L1105.9,297.8 L1105.0,297.0 L1104.1,297.8 L1103.2,298.4 L1102.3,300.1 L1101.4,300.5 L1100.5,302.2 L1099.6,302.7 L1098.7,300.8 L1097.9,300.8 L1097.0,299.1 L1096.2,298.3 L1095.2,297.1 L1094.3,297.7 L1093.4,301.3 L1092.4,301.0 L1091.5,300.7 L1090.5,302.8 L1089.7,298.6 L1088.9,297.2 L1088.1,296.9 L1087.4,296.1 L1086.6,295.8 L1085.6,297.8 L1084.6,300.9 L1083.7,304.1 L1082.7,305.2 L1081.9,306.2 L1081.2,305.0 L1080.4,303.4 L1079.5,302.7 L1078.5,304.9 L1077.6,304.1 L1077.0,313.7 L1076.5,326.0 L1075.9,325.6 L1075.3,330.0 L1074.5,332.1 L1073.7,343.5 L1072.8,338.2 L1072.0,345.0 L1071.0,342.8 L1070.1,345.1 L1069.1,356.7 L1068.4,349.9 L1067.6,345.3 L1066.9,342.5 L1066.1,339.8 L1065.4,347.2 L1064.6,349.1 L1064.1,341.3 L1063.5,345.2 L1062.8,342.6 L1062.0,344.8 L1061.3,350.4 L1060.4,344.2 L1059.6,341.2 L1059.0,344.7 L1058.4,349.8 L1057.9,342.1 L1057.3,351.0 L1056.5,346.6 L1055.6,351.1 L1054.9,345.7 L1054.1,339.8 L1053.4,338.5 L1052.6,348.0 L1051.8,349.5 L1051.0,354.4 L1050.1,344.7 L1049.2,347.3 L1048.2,338.9 L1047.5,337.8 L1046.7,345.1 L1046.0,347.4 L1045.1,346.2 L1044.3,347.3 L1043.4,343.9 L1042.5,344.4 L1041.6,344.4 L1040.7,346.0 L1039.8,343.5 L1039.0,352.7 L1038.3,353.2 L1037.5,354.5 L1036.6,349.4 L1035.6,348.7 L1034.7,346.9 L1033.7,341.9 L1032.7,346.9 L1031.8,352.4 L1030.8,354.5 L1029.9,351.0 L1029.0,345.0 L1028.1,344.4 L1027.2,341.7 L1026.3,340.7 L1025.7,343.5 L1025.1,346.0 L1024.3,349.7 L1023.4,345.9 L1022.6,347.0 L1021.8,351.2 L1021.0,346.3 L1020.3,342.7 L1019.5,337.5 L1018.7,339.3 L1018.0,341.3 L1017.2,353.7 L1016.3,352.4 L1015.4,350.1 L1014.5,352.3 L1013.6,355.7 L1012.7,353.8 L1012.2,344.8 L1011.6,348.1 L1010.8,346.9 L1009.9,345.2 L1009.1,344.4 L1008.2,349.9 L1007.3,345.8 L1006.4,349.7 L1005.5,351.3 L1004.6,346.8 L1003.7,353.0 L1003.0,349.3 L1002.2,343.3 L1001.5,342.4 L1000.7,347.8 L1000.0,352.6 L999.2,355.0 L998.3,351.2 L997.3,344.9 L996.4,341.0 L995.6,346.7 L994.7,354.6 L993.7,351.1 L992.7,344.9 L991.8,345.4 L990.8,341.3 L989.8,342.9 L988.9,343.2 L988.0,351.7 L987.0,348.3 L986.1,344.8 L985.1,343.7 L984.2,344.8 L983.3,350.3 L982.3,350.7 L981.5,350.0 L980.6,346.6 L979.8,351.1 L978.9,349.1 L978.2,343.0 L977.4,340.7 L976.7,345.5 L975.9,345.9 L975.2,342.7 L974.4,346.0 L973.6,348.1 L972.8,344.5 L971.9,345.7 L971.1,348.6 L970.2,350.3 L969.4,352.7 L968.5,348.3 L967.7,352.6 L966.8,344.5 L966.0,347.8 L965.2,339.3 L964.5,331.2 L963.7,326.5 L963.0,332.5 L962.2,343.4 L961.5,360.0 L960.6,350.0 L959.8,347.4 L959.2,344.2 L958.7,351.7 L957.8,336.9 L957.0,329.6 L956.2,335.5 L955.5,341.8 L954.7,350.9 L953.9,341.0 L953.0,339.0 L952.4,324.7 L951.7,314.7 L950.7,329.0 L949.7,343.7 L948.8,331.5 L948.0,318.8 L947.1,336.0 L946.3,357.6 L945.7,341.6 L945.2,334.3 L944.3,325.1 L943.5,323.8 L942.6,335.7 L941.8,342.7 L940.8,345.7 L939.9,346.6 L939.0,347.9 L938.2,344.0 L937.5,338.5 L936.7,341.4 L936.1,341.8 L935.6,350.7 L934.8,342.8 L934.1,337.5 L933.3,337.8 L932.6,339.7 L931.8,346.6 L931.1,351.4 L930.2,346.1 L929.4,347.1 L928.8,321.5 L928.3,305.6 L927.5,317.5 L926.8,333.5 L926.0,347.4 L925.2,348.1 L924.4,347.5 L923.7,343.3 L922.9,349.3 L922.2,349.7 L921.6,340.5 L921.0,340.1 L920.2,343.7 L919.4,348.6 L918.5,329.5 L917.7,310.4 L917.1,347.5 L916.3,344.2 L915.4,338.4 L914.6,339.2 L913.7,340.0 L912.9,338.0 L912.0,336.9 L911.2,346.3 L910.3,352.6 L909.5,342.3 L908.7,338.7 L907.8,328.4 L907.0,322.4 L906.0,326.9 L905.1,333.4 L904.1,344.9 L903.6,325.3 L903.0,307.8 L902.2,327.8 L901.3,345.5 L900.8,338.0 L900.2,322.7 L899.4,340.9 L898.5,349.2 L897.9,337.0 L897.4,332.6 L896.5,333.5 L895.7,343.0 L894.9,337.1 L894.0,337.7 L893.4,344.3 L892.9,348.2 L892.0,343.3 L891.2,335.9 L890.3,342.6 L889.5,346.5 L888.9,347.1 L888.4,339.0 L887.5,337.9 L886.7,348.1 L885.8,352.2 L885.0,356.7 L884.1,343.4 L883.3,339.1 L882.5,342.7 L881.7,343.5 L880.8,347.2 L880.5,346.9 L879.6,344.1 L878.6,349.0 L877.6,353.0 L876.8,343.6 L876.0,344.2 L875.2,344.3 L874.4,348.2 L873.7,352.2 L872.9,350.8 L872.0,347.5 L871.1,347.6 L870.3,346.9 L869.4,353.1 L868.6,346.2 L867.8,340.6 L867.0,346.4 L866.2,347.2 L865.5,345.2 L864.7,347.8 L863.7,352.5 L862.6,347.2 L861.6,350.8 L860.6,346.1 L859.6,350.4 L858.7,350.3 L857.7,350.0 L856.8,342.0 L855.8,346.1 L854.8,344.7 L853.7,352.4 L852.7,350.9 L851.8,346.4 L850.9,347.5 L850.0,351.7 L848.9,351.5 L847.9,359.5 L847.0,351.5 L846.1,349.8 L845.2,347.1 L844.4,351.0 L843.6,354.7 L842.7,349.0 L841.8,348.7 L841.0,346.4 L840.1,360.0 L839.1,348.9 L838.0,346.3 L837.2,350.0 L836.3,350.7 L835.5,352.5 L834.5,345.1 L833.5,352.5 L832.4,351.1 L831.4,355.4 L830.5,349.8 L829.6,351.7 L828.7,344.7 L827.8,348.6 L826.8,348.7 L825.9,347.4 L825.1,343.0 L824.2,343.1 L823.5,343.5 L822.7,345.5 L822.0,350.6 L821.1,351.5 L820.2,351.2 L819.3,347.4 L818.3,342.8 L817.2,348.8 L816.3,348.8 L815.4,349.0 L814.6,346.9 L813.8,355.5 L813.1,352.4 L812.3,351.7 L811.5,348.2 L810.6,349.7 L809.7,346.9 L808.8,352.7 L807.9,343.9 L807.0,347.1 L806.2,347.5 L805.4,350.5 L804.6,344.8 L803.8,346.4 L803.0,342.4 L802.2,343.1 L801.4,355.9 L800.5,345.8 L799.7,342.8 L798.8,344.8 L797.9,342.6 L797.0,353.4 L796.3,352.9 L795.5,357.0 L794.8,351.7 L794.0,351.0 L793.3,356.8 L792.5,348.7 L791.8,347.9 L791.0,350.3 L790.1,344.5 L789.2,342.6 L788.2,336.5 L787.3,339.3 L786.3,344.4 L785.4,352.1 L784.5,345.0 L783.6,349.2 L782.7,347.3 L781.8,344.8 L780.9,348.7 L780.0,349.7 L779.1,344.7 L778.2,343.0 L777.3,341.2 L776.4,344.5 L775.6,345.7 L774.7,347.8 L773.9,343.6 L773.0,341.4 L772.2,333.8 L771.3,332.5 L770.5,344.5 L769.6,352.9 L768.8,345.5 L767.9,343.8 L767.0,343.7 L766.1,344.5 L765.1,350.6 L764.2,345.1 L763.3,339.6 L762.3,338.8 L761.4,342.3 L760.4,345.3 L759.5,350.9 L758.7,345.1 L758.0,343.7 L757.2,338.8 L756.3,335.2 L755.4,340.6 L754.5,345.4 L753.6,350.1 L752.7,352.1 L752.0,352.4 L751.2,346.6 L750.5,356.3 L749.5,352.5 L748.5,345.5 L747.4,347.0 L746.4,343.9 L745.4,339.6 L744.6,343.2 L743.7,351.4 L742.8,346.5 L741.9,350.1 L741.0,345.8 L740.1,341.9 L739.2,348.0 L738.3,347.2 L737.3,348.7 L736.4,354.2 L735.7,345.9 L734.9,339.8 L734.2,334.1 L733.2,337.4 L732.2,339.0 L731.3,343.2 L730.3,343.0 L729.3,347.2 L728.4,351.6 L727.4,355.7 L726.6,342.0 L725.9,346.4 L725.1,341.5 L724.2,340.3 L723.3,349.5 L722.4,346.3 L721.5,350.8 L720.6,360.0 L720.1,343.2 L719.5,333.5 L718.6,337.3 L717.6,343.3 L716.7,353.7 L715.9,349.8 L715.2,345.1 L714.4,341.9 L713.5,345.4 L712.5,346.6 L711.5,346.2 L710.5,355.2 L709.6,350.4 L708.6,344.1 L707.7,343.8 L706.7,340.8 L705.8,345.1 L704.9,345.3 L703.9,344.1 L702.9,345.4 L701.9,343.8 L700.9,347.3 L700.1,343.0 L699.2,348.2 L698.4,345.3 L697.5,342.5 L696.8,342.2 L696.0,342.9 L695.3,347.8 L694.4,350.0 L693.4,346.5 L692.5,354.6 L691.5,346.4 L690.4,342.8 L689.4,336.6 L688.4,334.5 L687.4,335.7 L686.8,339.4 L686.3,351.9 L685.4,343.0 L684.6,344.4 L683.8,341.3 L683.1,342.6 L682.3,350.8 L681.4,349.2 L680.5,340.1 L679.5,341.3 L678.8,342.3 L678.0,344.0 L677.3,351.0 L676.4,345.4 L675.6,344.1 L674.7,342.7 L673.9,341.2 L673.0,343.9 L672.2,353.6 L671.4,343.1 L670.5,337.4 L669.7,351.0 L668.8,355.3 L668.0,351.7 L667.1,346.8 L666.5,342.9 L665.9,354.0 L664.9,346.6 L664.0,340.4 L663.0,337.9 L662.1,343.0 L661.1,347.1 L660.2,351.7 L659.3,344.2 L658.3,332.5 L657.4,329.9 L656.5,334.7 L655.7,348.5 L654.9,341.2 L654.0,339.3 L653.3,341.5 L652.5,342.1 L651.8,346.5 L651.2,336.6 L650.6,335.7 L649.9,338.1 L649.1,342.7 L648.4,351.9 L647.5,338.2 L646.7,336.6 L645.9,340.1 L645.0,340.4 L644.1,338.1 L643.1,336.3 L642.2,332.9 L641.3,332.0 L640.3,330.4 L639.4,332.1 L638.6,333.4 L637.9,331.7 L637.1,339.6 L636.2,331.1 L635.4,324.5 L634.6,326.8 L633.8,338.5 L633.2,333.6 L632.6,333.4 L631.8,335.0 L630.9,340.7 L630.0,325.3 L629.2,320.1 L628.3,329.7 L627.3,334.5 L626.4,340.6 L625.8,339.0 L625.3,333.7 L624.5,337.5 L623.6,345.4 L622.8,341.2 L621.9,341.9 L620.8,344.2 L619.7,348.4 L618.9,341.6 L618.2,340.0 L617.4,337.9 L616.8,325.4 L616.3,317.3 L615.5,320.7 L614.6,327.2 L613.8,329.7 L612.9,335.6 L612.0,324.5 L611.2,316.1 L610.5,326.5 L609.7,334.5 L609.0,342.9 L608.1,330.0 L607.3,324.5 L606.5,323.0 L605.6,324.0 L605.0,311.6 L604.5,301.9 L603.6,305.6 L602.8,308.5 L602.0,307.9 L601.1,305.9 L600.3,306.5 L599.6,306.4 L598.8,308.2 L597.7,301.1 L596.6,294.6 L596.0,295.6 L595.5,297.2 L594.7,298.5 L594.0,300.7 L593.2,302.9 L592.4,299.8 L591.7,297.1 L590.9,296.0 L589.8,297.6 L588.7,299.2 L587.9,297.9 L587.2,298.1 L586.4,297.0 L585.3,297.7 L584.2,300.2 L583.7,299.1 L583.1,297.5 L582.3,298.3 L581.6,300.2 L580.8,302.5 L579.9,300.3 L579.1,299.9 L578.2,300.2 L577.4,300.0 L576.3,301.5 L575.2,304.2 L574.4,301.2 L573.5,298.0 L573.0,302.6 L572.4,306.6 L571.5,302.8 L570.7,299.6 L569.9,303.2 L569.2,305.5 L568.4,308.3 L567.5,313.3 L566.7,320.2 L565.8,325.1 L564.8,329.5 L563.9,336.8 L563.0,330.6 L562.2,325.8 L561.7,330.4 L561.1,336.6 L560.2,326.5 L559.4,323.5 L558.8,334.2 L558.3,345.1 L557.5,333.6 L556.6,335.5 L555.8,341.1 L554.9,346.7 L554.3,345.7 L553.8,344.1 L553.0,346.9 L552.1,349.2 L551.2,345.5 L550.4,335.1 L549.6,329.0 L548.7,323.5 L547.9,325.9 L547.2,334.1 L546.4,338.3 L545.6,344.4 L544.8,340.8 L544.0,331.7 L543.3,327.6 L542.5,317.8 L541.8,325.5 L541.0,333.0 L540.3,349.5 L539.7,336.2 L539.1,331.1 L538.4,333.7 L537.6,329.1 L536.7,313.2 L535.9,321.0 L535.0,332.9 L534.1,334.5 L533.3,342.2 L532.2,340.1 L531.1,344.0 L530.2,331.9 L529.2,329.6 L528.3,327.4 L527.5,330.7 L526.8,335.5 L526.0,336.7 L525.1,338.3 L524.3,340.4 L523.5,339.8 L522.6,344.7 L521.9,333.7 L521.1,331.1 L520.4,327.5 L519.6,325.9 L518.9,329.8 L518.1,335.3 L517.2,335.6 L516.2,335.8 L515.3,340.8 L514.2,325.7 L513.4,326.8 L512.7,328.2 L511.9,333.6 L511.1,333.8 L510.3,342.7 L509.7,336.6 L509.1,335.4 L508.4,336.7 L507.6,334.8 L506.9,343.2 L505.8,325.2 L505.0,327.6 L504.1,333.0 L503.2,328.3 L502.4,328.0 L501.5,332.5 L500.5,337.5 L499.6,341.8 L498.8,335.3 L498.1,329.6 L497.3,327.6 L496.2,333.2 L495.1,340.2 L494.2,339.1 L493.4,339.0 L492.6,325.1 L491.9,320.6 L491.1,317.9 L490.2,327.6 L489.4,339.7 L488.5,335.3 L487.7,325.2 L486.8,324.9 L485.9,327.8 L485.0,328.8 L484.1,330.9 L483.2,331.6 L482.4,328.5 L481.5,322.6 L480.4,328.3 L479.3,344.1 L478.5,337.0 L477.6,330.8 L477.1,335.1 L476.5,337.6 L475.7,334.7 L475.0,332.2 L474.2,328.1 L473.4,331.6 L472.5,341.5 L471.6,323.6 L470.8,314.3 L469.7,313.5 L468.6,317.8 L467.8,322.8 L467.1,329.4 L466.3,331.5 L465.5,333.3 L464.6,340.8 L463.8,331.3 L462.9,324.7 L461.8,340.2 L460.7,316.0 L459.6,298.9 L458.8,305.4 L457.9,311.6 L457.1,319.7 L456.2,326.3 L455.3,327.6 L454.3,327.2 L453.4,334.8 L452.8,334.0 L452.2,345.9 L451.1,336.3 L450.0,331.7 L449.1,332.7 L448.3,331.9 L447.5,333.3 L446.6,337.2 L445.8,317.0 L444.9,300.2 L444.0,304.6 L443.2,315.7 L442.4,315.9 L441.5,315.0 L440.7,312.0 L439.9,310.8 L439.0,313.9 L438.2,316.4 L437.4,321.6 L436.5,330.3 L435.7,333.7 L434.7,310.5 L433.7,290.8 L432.9,300.7 L432.2,312.7 L431.4,326.8 L430.5,322.7 L429.7,321.4 L428.6,310.7 L427.5,303.8 L426.7,305.8 L426.0,309.7 L425.2,312.3 L424.4,312.4 L423.5,319.8 L422.9,310.1 L422.4,301.0 L421.5,312.2 L420.7,322.4 L419.9,314.2 L419.2,308.6 L418.4,302.5 L417.6,319.2 L416.8,337.6 L416.2,336.7 L415.6,342.0 L414.9,326.5 L414.1,314.9 L413.4,301.3 L412.3,333.2 L411.5,324.5 L410.8,319.6 L410.0,314.0 L409.0,314.5 L408.0,317.4 L406.9,322.6 L405.8,324.0 L404.9,321.5 L404.1,326.2 L403.2,323.7 L402.4,323.1 L401.3,308.2 L400.2,292.7 L399.4,292.6 L398.7,293.4 L397.9,293.6 L396.8,317.7 L396.0,317.0 L395.1,320.6 L394.6,337.0 L394.0,353.6 L393.1,349.1 L392.3,360.0 L391.4,346.0 L390.4,338.2 L389.5,332.4 L388.6,313.4 L387.8,291.1 L387.2,308.0 L386.6,328.4 L385.9,332.7 L385.1,337.4 L384.4,341.9 L383.5,323.1 L382.7,301.0 L381.9,308.4 L381.0,322.3 L380.1,330.4 L379.3,337.9 L378.4,331.2 L377.4,322.4 L376.5,317.1 L375.6,321.7 L374.8,329.4 L373.9,323.9 L372.9,319.3 L372.0,314.2 L371.4,317.8 L370.9,318.9 L370.1,324.7 L369.4,332.0 L368.6,339.5 L367.8,332.1 L366.9,330.6 L366.0,331.5 L365.2,343.4 L364.4,343.2 L363.5,340.8 L362.7,344.6 L361.9,340.9 L361.0,338.2 L360.2,341.6 L359.4,342.4 L358.5,341.0 L357.7,323.3 L357.0,308.8 L356.2,293.6 L355.3,298.1 L354.3,303.5 L353.4,308.6 L352.5,322.4 L351.7,335.4 L350.6,332.7 L349.5,335.5 L348.9,321.6 L348.3,318.9 L347.2,318.8 L346.1,330.5 L345.3,325.3 L344.6,318.6 L343.8,317.0 L342.7,323.0 L341.6,332.5 L340.8,321.1 L340.1,321.6 L339.3,315.5 L338.8,314.9 L338.2,319.5 L337.4,323.9 L336.7,328.8 L335.9,330.3 L335.0,331.0 L334.0,330.1 L333.1,335.3 L332.2,322.7 L331.4,315.5 L330.3,293.8 L329.2,293.2 L328.1,293.9 L327.2,298.5 L326.4,304.1 L325.5,298.0 L324.7,293.8 L323.9,302.4 L323.0,313.3 L322.1,306.2 L321.1,300.8 L320.2,296.4 L319.4,294.8 L318.5,294.3 L317.6,293.6 L316.8,293.9 L316.0,296.5 L315.1,300.9 L314.2,299.5 L313.2,299.4 L312.3,298.3 L311.4,296.6 L310.5,296.6 L309.6,294.9 L308.7,295.5 L307.8,294.5 L307.0,298.4 L306.3,301.2 L305.5,305.2 L304.4,301.9 L303.3,297.9 L302.4,297.0 L301.6,297.2 L300.8,298.3 L299.9,296.8 L299.1,294.9 L298.4,292.8 L297.6,290.9 L296.9,291.5 L296.1,291.5 L295.4,291.5 L294.6,293.1 L293.9,293.4 L293.1,295.8 L292.2,295.1 L291.3,296.5 L290.4,296.0 L289.5,296.1 L288.6,298.1 L287.8,294.4 L287.0,292.7 L286.1,291.2 L285.3,289.9 L284.5,287.2 L283.8,285.2 L283.0,283.0Z"/>
    <path id="w1" d="M283,440.0 L283.0,439.0 L283.8,436.8 L284.5,434.6 L285.3,432.1 L286.1,430.8 L287.0,428.5 L287.8,426.7 L288.6,424.2 L289.5,425.3 L290.4,425.3 L291.3,426.1 L292.2,426.7 L293.1,426.5 L293.9,428.4 L294.6,428.9 L295.4,430.0 L296.1,430.5 L296.9,430.7 L297.6,431.0 L298.4,429.4 L299.1,427.1 L299.9,424.2 L300.8,423.9 L301.6,424.7 L302.4,424.4 L303.3,423.0 L304.4,420.6 L305.5,416.4 L306.3,421.0 L307.0,424.0 L307.8,427.6 L308.7,426.9 L309.6,426.7 L310.5,425.6 L311.4,425.1 L312.3,424.2 L313.2,423.1 L314.2,421.4 L315.1,420.0 L316.0,424.8 L316.8,428.5 L317.6,428.1 L318.5,427.7 L319.4,426.7 L320.2,425.4 L321.1,420.7 L322.1,415.0 L323.0,408.5 L323.9,419.5 L324.7,428.5 L325.5,424.1 L326.4,418.6 L327.2,423.9 L328.1,428.5 L329.2,428.9 L330.3,427.6 L331.4,407.3 L332.2,400.7 L333.1,388.2 L334.0,391.6 L335.0,391.5 L335.9,389.3 L336.7,394.2 L337.4,397.8 L338.2,401.0 L338.8,404.9 L339.3,407.3 L340.1,401.9 L340.8,398.4 L341.6,390.4 L342.7,397.9 L343.8,403.0 L344.6,402.0 L345.3,397.3 L346.1,392.7 L347.2,400.7 L348.3,403.0 L348.9,397.7 L349.5,387.0 L350.6,387.5 L351.7,388.0 L352.5,401.1 L353.4,413.0 L354.3,419.3 L355.3,423.3 L356.2,427.6 L357.0,413.1 L357.7,395.8 L358.5,378.0 L359.4,378.1 L360.2,380.3 L361.0,380.7 L361.9,377.0 L362.7,379.0 L363.5,379.0 L364.4,380.9 L365.2,380.3 L366.0,389.0 L366.9,390.4 L367.8,389.3 L368.6,382.5 L369.4,389.8 L370.1,396.9 L370.9,403.0 L371.4,405.4 L372.0,407.3 L372.9,401.8 L373.9,398.5 L374.8,390.4 L375.6,398.8 L376.5,406.2 L377.4,399.1 L378.4,390.3 L379.3,380.0 L380.1,390.4 L381.0,399.4 L381.9,411.7 L382.7,421.0 L383.5,398.9 L384.4,376.0 L385.1,384.5 L385.9,388.3 L386.6,393.8 L387.2,413.2 L387.8,431.0 L388.6,409.0 L389.5,386.0 L390.4,380.0 L391.4,376.3 L392.3,364.5 L393.1,369.9 L394.0,367.0 L394.6,384.7 L395.1,400.0 L396.0,403.9 L396.8,403.0 L397.9,428.0 L398.7,428.5 L399.4,429.0 L400.2,429.0 L401.3,414.1 L402.4,396.0 L403.2,398.0 L404.1,396.3 L404.9,399.0 L405.8,396.0 L406.9,400.1 L408.0,403.0 L409.0,405.8 L410.0,407.3 L410.8,402.7 L411.5,394.8 L412.3,387.0 L413.4,420.0 L414.1,407.8 L414.9,394.5 L415.6,381.4 L416.2,382.3 L416.8,382.5 L417.6,402.8 L418.4,420.0 L419.2,412.9 L419.9,406.3 L420.7,397.2 L421.5,409.4 L422.4,420.0 L422.9,412.4 L423.5,403.0 L424.4,408.0 L425.2,408.5 L426.0,412.8 L426.7,416.2 L427.5,418.6 L428.6,410.4 L429.7,398.3 L430.5,397.7 L431.4,396.0 L432.2,408.0 L432.9,420.6 L433.7,431.0 L434.7,410.8 L435.7,387.0 L436.5,393.2 L437.4,398.2 L438.2,403.0 L439.0,409.2 L439.9,412.0 L440.7,411.1 L441.5,406.2 L442.4,407.2 L443.2,407.3 L444.0,416.3 L444.9,422.0 L445.8,405.8 L446.6,385.0 L447.5,388.0 L448.3,388.1 L449.1,387.6 L450.0,388.0 L451.1,382.1 L452.2,375.8 L452.8,385.9 L453.4,388.2 L454.3,391.6 L455.3,395.7 L456.2,396.0 L457.1,403.4 L457.9,411.3 L458.8,417.2 L459.6,423.0 L460.7,403.5 L461.8,382.5 L462.9,395.0 L463.8,388.8 L464.6,381.4 L465.5,388.1 L466.3,389.3 L467.1,394.1 L467.8,399.1 L468.6,403.0 L469.7,407.1 L470.8,408.5 L471.6,397.6 L472.5,381.4 L473.4,388.8 L474.2,391.6 L475.0,389.2 L475.7,388.3 L476.5,381.4 L477.1,387.8 L477.6,392.7 L478.5,386.0 L479.3,379.2 L480.4,390.3 L481.5,399.4 L482.4,394.7 L483.2,387.0 L484.1,389.0 L485.0,391.2 L485.9,393.6 L486.8,396.0 L487.7,396.0 L488.5,387.5 L489.4,378.0 L490.2,391.3 L491.1,402.0 L491.9,399.1 L492.6,394.1 L493.4,385.0 L494.2,384.2 L495.1,378.0 L496.2,388.0 L497.3,392.7 L498.1,390.7 L498.8,385.0 L499.6,380.3 L500.5,384.2 L501.5,387.9 L502.4,391.6 L503.2,392.1 L504.1,386.0 L505.0,394.0 L505.8,397.2 L506.9,377.0 L507.6,383.7 L508.4,382.4 L509.1,385.0 L509.7,385.2 L510.3,380.3 L511.1,386.7 L511.9,389.3 L512.7,393.7 L513.4,394.1 L514.2,395.0 L515.3,380.3 L516.2,386.6 L517.2,385.1 L518.1,387.0 L518.9,391.3 L519.6,394.2 L520.4,394.0 L521.1,391.2 L521.9,384.9 L522.6,375.8 L523.5,380.8 L524.3,383.1 L525.1,385.5 L526.0,383.7 L526.8,388.0 L527.5,392.1 L528.3,392.7 L529.2,391.5 L530.2,387.1 L531.1,379.2 L532.2,382.0 L533.3,381.4 L534.1,388.4 L535.0,389.3 L535.9,401.4 L536.7,408.5 L537.6,390.0 L538.4,388.0 L539.1,387.2 L539.7,382.7 L540.3,373.5 L541.0,385.5 L541.8,393.8 L542.5,402.0 L543.3,395.6 L544.0,387.7 L544.8,377.0 L545.6,379.0 L546.4,380.3 L547.2,389.1 L547.9,396.3 L548.7,399.4 L549.6,394.5 L550.4,386.6 L551.2,377.6 L552.1,368.0 L553.0,376.0 L553.8,377.0 L554.3,376.8 L554.9,371.3 L555.8,381.6 L556.6,388.2 L557.5,384.9 L558.3,374.7 L558.8,387.4 L559.4,399.4 L560.2,393.5 L561.1,382.5 L561.7,389.4 L562.2,396.1 L563.0,392.0 L563.9,383.7 L564.8,391.0 L565.8,395.7 L566.7,400.6 L567.5,407.9 L568.4,412.0 L569.2,416.2 L569.9,419.6 L570.7,422.0 L571.5,419.4 L572.4,414.0 L573.0,419.5 L573.5,424.2 L574.4,420.9 L575.2,417.5 L576.3,420.2 L577.4,422.0 L578.2,422.3 L579.1,421.1 L579.9,420.5 L580.8,419.7 L581.6,422.4 L582.3,423.5 L583.1,424.2 L583.7,423.0 L584.2,420.8 L585.3,423.6 L586.4,424.2 L587.2,423.8 L587.9,423.5 L588.7,422.0 L589.8,424.5 L590.9,426.5 L591.7,424.4 L592.4,422.3 L593.2,418.6 L594.0,421.7 L594.7,423.4 L595.5,424.2 L596.0,425.7 L596.6,426.5 L597.7,420.6 L598.8,413.0 L599.6,414.3 L600.3,414.7 L601.1,415.2 L602.0,414.5 L602.8,412.0 L603.6,417.3 L604.5,419.7 L605.0,410.3 L605.6,397.2 L606.5,399.9 L607.3,398.3 L608.1,391.6 L609.0,378.0 L609.7,388.0 L610.5,396.5 L611.2,405.0 L612.0,398.0 L612.9,388.2 L613.8,391.4 L614.6,392.7 L615.5,399.5 L616.3,405.0 L616.8,396.8 L617.4,386.0 L618.2,383.3 L618.9,377.7 L619.7,370.2 L620.8,375.1 L621.9,377.0 L622.8,381.2 L623.6,378.1 L624.5,386.0 L625.3,386.0 L625.8,384.4 L626.4,379.2 L627.3,386.2 L628.3,392.8 L629.2,399.4 L630.0,393.9 L630.9,382.5 L631.8,384.9 L632.6,387.0 L633.2,388.1 L633.8,383.7 L634.6,391.9 L635.4,396.0 L636.2,389.8 L637.1,381.4 L637.9,387.9 L638.6,388.3 L639.4,391.6 L640.3,390.2 L641.3,389.5 L642.2,386.0 L643.1,383.4 L644.1,384.1 L645.0,378.0 L645.9,383.5 L646.7,387.0 L647.5,380.3 L648.4,372.4 L649.1,377.5 L649.9,384.7 L650.6,387.0 L651.2,383.2 L651.8,375.8 L652.5,380.1 L653.3,381.6 L654.0,380.3 L654.9,381.6 L655.7,375.8 L656.5,387.5 L657.4,391.6 L658.3,386.4 L659.3,376.8 L660.2,368.0 L661.1,375.5 L662.1,379.2 L663.0,383.7 L664.0,378.5 L664.9,375.4 L665.9,368.0 L666.5,375.8 L667.1,376.9 L668.0,370.5 L668.8,362.3 L669.7,373.1 L670.5,381.4 L671.4,376.8 L672.2,369.0 L673.0,377.9 L673.9,380.3 L674.7,379.3 L675.6,376.7 L676.4,374.3 L677.3,367.3 L678.0,373.9 L678.8,380.2 L679.5,381.4 L680.5,381.3 L681.4,373.6 L682.3,369.0 L683.1,376.8 L683.8,379.0 L684.6,379.2 L685.4,374.7 L686.3,369.0 L686.8,380.0 L687.4,387.1 L688.4,385.8 L689.4,383.5 L690.4,377.6 L691.5,374.9 L692.5,368.5 L693.4,373.4 L694.4,373.5 L695.3,370.2 L696.0,376.5 L696.8,376.1 L697.5,375.8 L698.4,377.6 L699.2,374.5 L700.1,375.8 L700.9,371.3 L701.9,376.7 L702.9,377.3 L703.9,379.1 L704.9,377.5 L705.8,376.6 L706.7,377.9 L707.7,376.5 L708.6,374.8 L709.6,370.8 L710.5,366.2 L711.5,372.6 L712.5,372.5 L713.5,377.6 L714.4,375.8 L715.2,378.0 L715.9,374.1 L716.7,370.7 L717.6,376.9 L718.6,384.1 L719.5,388.2 L720.1,378.8 L720.6,364.5 L721.5,371.6 L722.4,373.2 L723.3,374.1 L724.2,380.7 L725.1,380.3 L725.9,376.3 L726.6,375.5 L727.4,367.3 L728.4,370.6 L729.3,373.8 L730.3,378.2 L731.3,377.6 L732.2,380.0 L733.2,383.9 L734.2,384.2 L734.9,381.4 L735.7,376.2 L736.4,366.2 L737.3,372.8 L738.3,377.1 L739.2,375.8 L740.1,376.6 L741.0,377.3 L741.9,371.8 L742.8,371.0 L743.7,368.5 L744.6,376.0 L745.4,378.6 L746.4,377.4 L747.4,377.0 L748.5,374.2 L749.5,371.3 L750.5,366.2 L751.2,371.6 L752.0,371.3 L752.7,369.6 L753.6,374.0 L754.5,377.2 L755.4,382.0 L756.3,385.0 L757.2,384.2 L758.0,380.2 L758.7,378.4 L759.5,369.6 L760.4,377.5 L761.4,378.7 L762.3,379.7 L763.3,378.4 L764.2,372.8 L765.1,367.9 L766.1,374.0 L767.0,377.3 L767.9,378.6 L768.8,375.8 L769.6,367.3 L770.5,377.6 L771.3,387.6 L772.2,387.2 L773.0,381.4 L773.9,376.8 L774.7,370.7 L775.6,378.1 L776.4,378.0 L777.3,379.0 L778.2,377.1 L779.1,376.5 L780.0,372.0 L780.9,370.2 L781.8,372.5 L782.7,371.5 L783.6,373.9 L784.5,373.4 L785.4,368.5 L786.3,374.4 L787.3,379.9 L788.2,382.5 L789.2,377.8 L790.1,374.1 L791.0,366.8 L791.8,370.1 L792.5,369.6 L793.3,364.0 L794.0,366.3 L794.8,365.3 L795.5,363.4 L796.3,367.2 L797.0,369.1 L797.9,375.3 L798.8,375.6 L799.7,377.6 L800.5,371.6 L801.4,368.7 L802.2,375.9 L803.0,375.8 L803.8,374.4 L804.6,373.8 L805.4,371.4 L806.2,372.3 L807.0,371.0 L807.9,373.9 L808.8,370.0 L809.7,372.4 L810.6,373.4 L811.5,372.5 L812.3,372.5 L813.1,366.9 L813.8,363.2 L814.6,372.4 L815.4,374.3 L816.3,373.2 L817.2,370.9 L818.3,375.3 L819.3,374.9 L820.2,373.2 L821.1,370.1 L822.0,366.2 L822.7,372.0 L823.5,374.6 L824.2,375.6 L825.1,374.7 L825.9,370.1 L826.8,373.5 L827.8,375.3 L828.7,374.1 L829.6,372.8 L830.5,371.0 L831.4,367.9 L832.4,373.0 L833.5,371.8 L834.5,372.5 L835.5,366.8 L836.3,371.1 L837.2,374.2 L838.0,371.6 L839.1,370.5 L840.1,363.2 L841.0,371.7 L841.8,371.5 L842.7,370.7 L843.6,367.6 L844.4,373.2 L845.2,371.4 L846.1,373.0 L847.0,371.2 L847.9,364.1 L848.9,369.9 L850.0,372.4 L850.9,372.4 L851.8,374.0 L852.7,367.9 L853.7,370.7 L854.8,376.2 L855.8,373.2 L856.8,376.8 L857.7,372.7 L858.7,371.5 L859.6,372.1 L860.6,374.0 L861.6,370.0 L862.6,371.1 L863.7,370.1 L864.7,369.4 L865.5,375.6 L866.2,375.7 L867.0,375.9 L867.8,377.7 L868.6,372.9 L869.4,370.5 L870.3,375.2 L871.1,376.1 L872.0,376.1 L872.9,369.8 L873.7,371.8 L874.4,374.5 L875.2,375.5 L876.0,375.9 L876.8,374.3 L877.6,367.1 L878.6,375.2 L879.6,374.0 L880.5,374.7 L880.8,370.8 L881.7,374.5 L882.5,379.4 L883.3,380.3 L884.1,374.4 L885.0,362.0 L885.8,369.9 L886.7,373.5 L887.5,379.9 L888.4,380.3 L888.9,377.2 L889.5,372.4 L890.3,378.9 L891.2,384.8 L892.0,379.6 L892.9,373.5 L893.4,378.8 L894.0,383.7 L894.9,382.1 L895.7,375.8 L896.5,385.2 L897.4,390.4 L897.9,381.6 L898.5,367.9 L899.4,383.1 L900.2,397.2 L900.8,385.5 L901.3,372.4 L902.2,393.4 L903.0,413.0 L903.6,397.6 L904.1,376.9 L905.1,388.6 L906.0,395.8 L907.0,400.6 L907.8,392.0 L908.7,383.1 L909.5,378.4 L910.3,365.1 L911.2,377.0 L912.0,384.8 L912.9,385.1 L913.7,379.2 L914.6,382.2 L915.4,382.5 L916.3,378.4 L917.1,370.2 L917.7,410.7 L918.5,391.7 L919.4,369.0 L920.2,377.7 L921.0,382.5 L921.6,380.1 L922.2,372.4 L922.9,372.5 L923.7,375.7 L924.4,372.4 L925.2,376.4 L926.0,372.4 L926.8,387.4 L927.5,402.2 L928.3,415.2 L928.8,398.3 L929.4,376.9 L930.2,376.5 L931.1,372.4 L931.8,377.8 L932.6,382.1 L933.3,385.9 L934.1,383.9 L934.8,377.7 L935.6,373.5 L936.1,381.9 L936.7,382.5 L937.5,382.6 L938.2,379.0 L939.0,372.4 L939.9,377.9 L940.8,378.3 L941.8,376.9 L942.6,388.0 L943.5,396.1 L944.3,394.1 L945.2,388.2 L945.7,378.1 L946.3,363.4 L947.1,386.0 L948.0,400.6 L948.8,391.1 L949.7,375.8 L950.7,391.9 L951.7,406.2 L952.4,397.8 L953.0,383.7 L953.9,378.6 L954.7,366.8 L955.5,377.9 L956.2,385.1 L957.0,389.3 L957.8,382.0 L958.7,371.3 L959.2,378.2 L959.8,376.9 L960.6,374.5 L961.5,363.4 L962.2,376.8 L963.0,386.7 L963.7,393.8 L964.5,389.9 L965.2,382.0 L966.0,373.5 L966.8,375.6 L967.7,371.1 L968.5,371.0 L969.4,367.9 L970.2,373.5 L971.1,374.7 L971.9,373.9 L972.8,374.6 L973.6,375.2 L974.4,371.3 L975.2,375.7 L975.9,375.4 L976.7,375.8 L977.4,378.1 L978.2,374.8 L978.9,369.6 L979.8,371.9 L980.6,374.2 L981.5,374.4 L982.3,372.4 L983.3,374.2 L984.2,372.8 L985.1,375.0 L986.1,372.6 L987.0,372.2 L988.0,367.9 L988.9,374.6 L989.8,378.4 L990.8,376.9 L991.8,374.2 L992.7,374.2 L993.7,372.2 L994.7,365.7 L995.6,372.5 L996.4,376.9 L997.3,375.6 L998.3,370.8 L999.2,367.3 L1000.0,371.5 L1000.7,375.5 L1001.5,376.9 L1002.2,375.1 L1003.0,373.6 L1003.7,370.2 L1004.6,374.3 L1005.5,372.2 L1006.4,371.7 L1007.3,373.6 L1008.2,368.5 L1009.1,373.1 L1009.9,376.9 L1010.8,376.9 L1011.6,375.8 L1012.2,376.0 L1012.7,368.5 L1013.6,368.6 L1014.5,371.0 L1015.4,371.6 L1016.3,367.8 L1017.2,367.3 L1018.0,377.5 L1018.7,379.7 L1019.5,384.8 L1020.3,381.5 L1021.0,375.1 L1021.8,369.0 L1022.6,372.9 L1023.4,374.8 L1024.3,373.5 L1025.1,374.7 L1025.7,380.6 L1026.3,378.0 L1027.2,378.1 L1028.1,376.9 L1029.0,375.5 L1029.9,372.6 L1030.8,369.0 L1031.8,371.8 L1032.7,375.0 L1033.7,375.9 L1034.7,374.7 L1035.6,372.6 L1036.6,371.5 L1037.5,364.5 L1038.3,369.4 L1039.0,371.4 L1039.8,374.7 L1040.7,376.2 L1041.6,375.8 L1042.5,376.7 L1043.4,379.8 L1044.3,376.9 L1045.1,375.9 L1046.0,371.3 L1046.7,378.8 L1047.5,381.3 L1048.2,381.4 L1049.2,376.0 L1050.1,375.0 L1051.0,364.5 L1051.8,374.8 L1052.6,376.1 L1053.4,381.4 L1054.1,380.6 L1054.9,373.7 L1055.6,366.8 L1056.5,372.5 L1057.3,373.5 L1057.9,376.0 L1058.4,369.0 L1059.0,374.1 L1059.6,376.9 L1060.4,377.1 L1061.3,372.4 L1062.0,378.6 L1062.8,379.4 L1063.5,378.0 L1064.1,376.3 L1064.6,370.2 L1065.4,377.0 L1066.1,378.4 L1066.9,376.9 L1067.6,375.6 L1068.4,369.2 L1069.1,364.5 L1070.1,372.5 L1071.0,376.4 L1072.0,379.2 L1072.8,380.6 L1073.7,380.3 L1074.5,387.3 L1075.3,393.8 L1075.9,396.6 L1076.5,396.1 L1077.0,406.5 L1077.6,416.3 L1078.5,417.4 L1079.5,418.2 L1080.4,417.5 L1081.2,417.5 L1081.9,416.4 L1082.7,415.2 L1083.7,418.7 L1084.6,420.9 L1085.6,423.8 L1086.6,425.4 L1087.4,425.5 L1088.1,425.7 L1088.9,424.2 L1089.7,422.4 L1090.5,418.0 L1091.5,420.1 L1092.4,420.4 L1093.4,421.3 L1094.3,423.3 L1095.2,424.1 L1096.2,424.2 L1097.0,423.6 L1097.9,421.9 L1098.7,420.4 L1099.6,418.6 L1100.5,420.5 L1101.4,421.2 L1102.3,422.1 L1103.2,423.0 L1104.1,423.1 L1105.0,424.5 L1105.9,424.4 L1106.8,425.1 L1107.7,426.4 L1108.6,425.9 L1109.4,427.2 L1110.3,427.6 L1111.1,427.2 L1112.0,427.6 L1112.9,428.3 L1113.8,429.2 L1114.7,429.9 L1115.6,430.7 L1116.5,431.0 L1117.4,427.5 L1118.3,424.5 L1119.3,420.3 L1120.2,421.7 L1121.1,423.0 L1122.1,424.2 L1122.9,425.1 L1123.8,425.1 L1124.6,425.3 L1125.5,424.8 L1126.3,425.7 L1127.2,426.4 L1128.0,426.7 L1128.8,427.0 L1129.7,427.7 L1130.6,428.4 L1131.5,428.8 L1132.5,428.5 L1133.4,428.7 L1134.1,427.7 L1134.9,426.5 L1135,440.0 L1134.9,453.9 L1134.1,452.3 L1133.4,451.0 L1132.5,450.8 L1131.5,450.6 L1130.6,451.7 L1129.7,451.5 L1128.8,452.2 L1128.0,453.8 L1127.2,453.0 L1126.3,454.2 L1125.5,455.2 L1124.6,454.8 L1123.8,454.0 L1122.9,454.8 L1122.1,454.7 L1121.1,457.4 L1120.2,458.0 L1119.3,460.1 L1118.3,454.5 L1117.4,451.6 L1116.5,448.9 L1115.6,449.4 L1114.7,449.4 L1113.8,450.2 L1112.9,451.1 L1112.0,452.7 L1111.1,452.5 L1110.3,452.7 L1109.4,452.3 L1108.6,453.5 L1107.7,453.6 L1106.8,454.5 L1105.9,455.5 L1105.0,455.8 L1104.1,456.2 L1103.2,457.2 L1102.3,458.2 L1101.4,458.1 L1100.5,458.7 L1099.6,462.2 L1098.7,458.6 L1097.9,457.5 L1097.0,455.4 L1096.2,454.8 L1095.2,455.6 L1094.3,455.9 L1093.4,458.6 L1092.4,459.3 L1091.5,459.2 L1090.5,460.8 L1089.7,458.0 L1088.9,455.6 L1088.1,453.8 L1087.4,454.9 L1086.6,454.2 L1085.6,456.0 L1084.6,459.3 L1083.7,460.9 L1082.7,463.3 L1081.9,464.4 L1081.2,461.4 L1080.4,461.7 L1079.5,462.7 L1078.5,463.3 L1077.6,464.4 L1077.0,473.8 L1076.5,483.4 L1075.9,482.1 L1075.3,487.6 L1074.5,492.9 L1073.7,498.5 L1072.8,497.2 L1072.0,496.7 L1071.0,501.6 L1070.1,505.6 L1069.1,510.5 L1068.4,509.7 L1067.6,500.3 L1066.9,504.2 L1066.1,501.4 L1065.4,502.0 L1064.6,508.2 L1064.1,504.7 L1063.5,497.7 L1062.8,501.1 L1062.0,500.3 L1061.3,503.8 L1060.4,503.6 L1059.6,502.4 L1059.0,503.2 L1058.4,510.4 L1057.9,501.2 L1057.3,508.9 L1056.5,507.1 L1055.6,511.9 L1054.9,504.3 L1054.1,497.7 L1053.4,498.6 L1052.6,500.2 L1051.8,501.3 L1051.0,516.0 L1050.1,507.4 L1049.2,503.2 L1048.2,495.5 L1047.5,499.6 L1046.7,499.5 L1046.0,509.6 L1045.1,501.5 L1044.3,501.6 L1043.4,497.2 L1042.5,499.1 L1041.6,506.4 L1040.7,505.8 L1039.8,502.5 L1039.0,504.9 L1038.3,510.3 L1037.5,518.0 L1036.6,509.9 L1035.6,502.8 L1034.7,502.2 L1033.7,505.9 L1032.7,506.9 L1031.8,506.3 L1030.8,506.6 L1029.9,506.1 L1029.0,501.2 L1028.1,499.6 L1027.2,502.1 L1026.3,499.6 L1025.7,498.3 L1025.1,502.7 L1024.3,504.9 L1023.4,502.2 L1022.6,509.8 L1021.8,513.6 L1021.0,503.4 L1020.3,499.4 L1019.5,492.2 L1018.7,502.0 L1018.0,503.3 L1017.2,515.6 L1016.3,510.2 L1015.4,510.5 L1014.5,510.4 L1013.6,513.2 L1012.7,509.8 L1012.2,505.0 L1011.6,499.9 L1010.8,498.9 L1009.9,503.1 L1009.1,507.0 L1008.2,513.6 L1007.3,506.1 L1006.4,506.8 L1005.5,508.9 L1004.6,504.0 L1003.7,505.4 L1003.0,505.5 L1002.2,505.2 L1001.5,505.3 L1000.7,502.0 L1000.0,504.4 L999.2,511.3 L998.3,507.7 L997.3,506.8 L996.4,500.2 L995.6,503.2 L994.7,513.4 L993.7,505.9 L992.7,504.5 L991.8,503.0 L990.8,498.8 L989.8,499.7 L988.9,506.3 L988.0,507.1 L987.0,509.1 L986.1,505.3 L985.1,501.1 L984.2,509.4 L983.3,504.0 L982.3,506.9 L981.5,508.1 L980.6,504.7 L979.8,504.0 L978.9,507.6 L978.2,501.1 L977.4,502.1 L976.7,501.4 L975.9,503.1 L975.2,500.1 L974.4,507.8 L973.6,506.3 L972.8,503.2 L971.9,503.7 L971.1,504.9 L970.2,507.6 L969.4,512.6 L968.5,508.0 L967.7,506.3 L966.8,502.6 L966.0,508.5 L965.2,498.7 L964.5,488.6 L963.7,485.4 L963.0,490.3 L962.2,500.9 L961.5,517.3 L960.6,506.4 L959.8,499.2 L959.2,503.9 L958.7,511.2 L957.8,497.1 L957.0,491.0 L956.2,493.3 L955.5,501.9 L954.7,509.0 L953.9,499.6 L953.0,495.7 L952.4,481.1 L951.7,471.7 L950.7,488.7 L949.7,504.5 L948.8,487.9 L948.0,478.3 L947.1,491.5 L946.3,511.8 L945.7,498.3 L945.2,488.8 L944.3,487.5 L943.5,483.9 L942.6,493.8 L941.8,505.1 L940.8,502.3 L939.9,503.2 L939.0,508.9 L938.2,501.7 L937.5,498.2 L936.7,494.1 L936.1,498.0 L935.6,502.9 L934.8,498.5 L934.1,493.2 L933.3,491.4 L932.6,494.5 L931.8,501.1 L931.1,509.1 L930.2,503.9 L929.4,500.3 L928.8,483.0 L928.3,464.8 L927.5,478.7 L926.8,490.8 L926.0,510.0 L925.2,505.0 L924.4,506.5 L923.7,500.2 L922.9,508.2 L922.2,508.0 L921.6,500.0 L921.0,497.2 L920.2,499.2 L919.4,507.4 L918.5,488.1 L917.7,469.1 L917.1,505.8 L916.3,497.5 L915.4,494.6 L914.6,499.9 L913.7,500.6 L912.9,492.8 L912.0,493.2 L911.2,504.8 L910.3,514.0 L909.5,500.2 L908.7,495.5 L907.8,488.5 L907.0,480.5 L906.0,485.2 L905.1,491.0 L904.1,499.1 L903.6,480.5 L903.0,467.4 L902.2,486.6 L901.3,504.1 L900.8,496.0 L900.2,482.7 L899.4,494.6 L898.5,509.5 L897.9,495.7 L897.4,490.9 L896.5,493.3 L895.7,504.8 L894.9,497.4 L894.0,496.7 L893.4,497.7 L892.9,504.6 L892.0,500.2 L891.2,496.9 L890.3,502.9 L889.5,507.7 L888.9,499.6 L888.4,498.1 L887.5,495.9 L886.7,504.7 L885.8,509.4 L885.0,518.0 L884.1,502.7 L883.3,501.4 L882.5,499.8 L881.7,502.4 L880.8,509.0 L880.5,506.1 L879.6,507.5 L878.6,505.1 L877.6,515.0 L876.8,508.0 L876.0,504.3 L875.2,505.3 L874.4,501.4 L873.7,508.8 L872.9,507.4 L872.0,505.9 L871.1,501.6 L870.3,505.4 L869.4,510.5 L868.6,506.7 L867.8,500.4 L867.0,500.3 L866.2,500.4 L865.5,501.9 L864.7,509.7 L863.7,510.2 L862.6,508.6 L861.6,507.9 L860.6,507.1 L859.6,507.1 L858.7,508.8 L857.7,507.8 L856.8,505.2 L855.8,508.2 L854.8,506.2 L853.7,507.5 L852.7,512.6 L851.8,504.9 L850.9,505.7 L850.0,505.2 L848.9,505.4 L847.9,513.2 L847.0,506.9 L846.1,503.7 L845.2,508.2 L844.4,505.9 L843.6,507.4 L842.7,507.3 L841.8,509.8 L841.0,508.2 L840.1,518.0 L839.1,509.8 L838.0,506.0 L837.2,507.0 L836.3,505.6 L835.5,515.3 L834.5,508.1 L833.5,504.2 L832.4,503.6 L831.4,507.3 L830.5,507.9 L829.6,508.6 L828.7,502.3 L827.8,503.0 L826.8,506.4 L825.9,511.5 L825.1,506.8 L824.2,506.8 L823.5,502.6 L822.7,505.9 L822.0,510.5 L821.1,510.8 L820.2,504.7 L819.3,504.6 L818.3,501.6 L817.2,506.3 L816.3,503.7 L815.4,504.0 L814.6,509.4 L813.8,515.5 L813.1,512.7 L812.3,503.0 L811.5,510.0 L810.6,502.3 L809.7,506.0 L808.8,511.4 L807.9,502.3 L807.0,508.7 L806.2,510.2 L805.4,507.8 L804.6,508.4 L803.8,506.5 L803.0,502.8 L802.2,502.6 L801.4,509.9 L800.5,510.5 L799.7,500.2 L798.8,500.8 L797.9,505.9 L797.0,513.3 L796.3,511.2 L795.5,517.2 L794.8,510.9 L794.0,512.8 L793.3,511.5 L792.5,511.1 L791.8,511.4 L791.0,512.8 L790.1,501.4 L789.2,500.1 L788.2,495.7 L787.3,498.7 L786.3,502.7 L785.4,511.3 L784.5,508.9 L783.6,507.7 L782.7,506.4 L781.8,503.8 L780.9,505.3 L780.0,503.4 L779.1,502.9 L778.2,503.8 L777.3,497.2 L776.4,499.6 L775.6,502.2 L774.7,506.4 L773.9,500.0 L773.0,495.0 L772.2,489.8 L771.3,490.9 L770.5,503.6 L769.6,509.7 L768.8,504.6 L767.9,502.0 L767.0,504.9 L766.1,506.1 L765.1,513.5 L764.2,505.8 L763.3,501.2 L762.3,501.1 L761.4,501.4 L760.4,504.3 L759.5,509.8 L758.7,502.4 L758.0,497.6 L757.2,494.4 L756.3,491.7 L755.4,496.3 L754.5,500.4 L753.6,502.8 L752.7,505.9 L752.0,509.2 L751.2,504.0 L750.5,510.6 L749.5,508.2 L748.5,504.2 L747.4,499.1 L746.4,499.9 L745.4,497.7 L744.6,500.4 L743.7,509.0 L742.8,510.4 L741.9,509.2 L741.0,498.9 L740.1,501.1 L739.2,500.5 L738.3,500.1 L737.3,508.6 L736.4,512.3 L735.7,501.5 L734.9,500.4 L734.2,496.3 L733.2,496.0 L732.2,498.2 L731.3,501.9 L730.3,500.8 L729.3,505.5 L728.4,504.7 L727.4,509.3 L726.6,506.1 L725.9,503.5 L725.1,501.6 L724.2,498.7 L723.3,502.1 L722.4,504.4 L721.5,504.3 L720.6,514.6 L720.1,499.6 L719.5,491.1 L718.6,493.1 L717.6,505.4 L716.7,504.7 L715.9,501.7 L715.2,499.7 L714.4,502.6 L713.5,499.7 L712.5,503.2 L711.5,505.7 L710.5,509.0 L709.6,506.2 L708.6,501.1 L707.7,505.6 L706.7,501.1 L705.8,505.3 L704.9,498.6 L703.9,497.2 L702.9,500.7 L701.9,502.5 L700.9,511.4 L700.1,503.6 L699.2,501.2 L698.4,500.8 L697.5,505.2 L696.8,499.9 L696.0,499.1 L695.3,512.4 L694.4,505.0 L693.4,506.7 L692.5,513.9 L691.5,505.4 L690.4,499.7 L689.4,493.6 L688.4,494.7 L687.4,493.5 L686.8,497.7 L686.3,509.7 L685.4,503.0 L684.6,499.0 L683.8,503.2 L683.1,501.5 L682.3,506.6 L681.4,503.5 L680.5,494.8 L679.5,495.8 L678.8,496.7 L678.0,506.8 L677.3,513.0 L676.4,503.2 L675.6,503.6 L674.7,497.2 L673.9,501.7 L673.0,501.0 L672.2,511.3 L671.4,503.6 L670.5,500.5 L669.7,504.9 L668.8,518.0 L668.0,504.9 L667.1,502.0 L666.5,501.3 L665.9,509.2 L664.9,501.2 L664.0,499.1 L663.0,493.9 L662.1,497.5 L661.1,506.3 L660.2,510.0 L659.3,501.4 L658.3,490.8 L657.4,485.8 L656.5,489.4 L655.7,503.0 L654.9,497.1 L654.0,499.6 L653.3,500.0 L652.5,498.8 L651.8,499.7 L651.2,497.5 L650.6,492.1 L649.9,496.9 L649.1,498.4 L648.4,504.4 L647.5,495.7 L646.7,489.9 L645.9,495.0 L645.0,502.7 L644.1,495.5 L643.1,496.3 L642.2,493.3 L641.3,491.7 L640.3,488.7 L639.4,489.3 L638.6,491.8 L637.9,493.3 L637.1,495.4 L636.2,488.8 L635.4,482.6 L634.6,488.0 L633.8,494.4 L633.2,489.6 L632.6,491.4 L631.8,495.0 L630.9,494.4 L630.0,487.0 L629.2,480.7 L628.3,489.0 L627.3,490.7 L626.4,498.0 L625.8,495.9 L625.3,495.9 L624.5,491.1 L623.6,497.9 L622.8,499.4 L621.9,498.8 L620.8,506.1 L619.7,507.4 L618.9,501.2 L618.2,498.2 L617.4,491.6 L616.8,483.0 L616.3,473.0 L615.5,478.1 L614.6,487.5 L613.8,485.6 L612.9,491.9 L612.0,482.4 L611.2,473.2 L610.5,484.0 L609.7,490.5 L609.0,499.3 L608.1,485.7 L607.3,481.2 L606.5,480.7 L605.6,481.0 L605.0,469.4 L604.5,459.5 L603.6,462.7 L602.8,467.7 L602.0,466.3 L601.1,464.4 L600.3,465.3 L599.6,464.3 L598.8,467.2 L597.7,458.2 L596.6,453.1 L596.0,454.7 L595.5,455.5 L594.7,456.5 L594.0,457.6 L593.2,460.9 L592.4,456.7 L591.7,456.1 L590.9,453.7 L589.8,455.4 L588.7,456.9 L587.9,455.4 L587.2,455.7 L586.4,454.9 L585.3,455.3 L584.2,459.2 L583.7,456.1 L583.1,455.4 L582.3,456.5 L581.6,456.7 L580.8,460.9 L579.9,458.8 L579.1,457.8 L578.2,457.8 L577.4,458.6 L576.3,459.8 L575.2,461.5 L574.4,459.6 L573.5,454.8 L573.0,460.7 L572.4,467.0 L571.5,461.4 L570.7,458.2 L569.9,459.0 L569.2,463.9 L568.4,468.5 L567.5,472.7 L566.7,477.6 L565.8,481.5 L564.8,489.9 L563.9,496.0 L563.0,485.4 L562.2,482.4 L561.7,489.8 L561.1,496.9 L560.2,485.7 L559.4,478.4 L558.8,494.2 L558.3,506.3 L557.5,493.0 L556.6,490.6 L555.8,498.8 L554.9,510.2 L554.3,499.2 L553.8,504.3 L553.0,501.6 L552.1,508.5 L551.2,503.9 L550.4,492.0 L549.6,484.2 L548.7,481.8 L547.9,483.0 L547.2,490.9 L546.4,500.2 L545.6,500.6 L544.8,501.6 L544.0,493.2 L543.3,481.4 L542.5,477.6 L541.8,487.5 L541.0,496.2 L540.3,505.2 L539.7,494.8 L539.1,489.3 L538.4,491.7 L537.6,490.6 L536.7,470.5 L535.9,477.9 L535.0,490.1 L534.1,489.7 L533.3,496.7 L532.2,497.3 L531.1,498.6 L530.2,493.6 L529.2,485.8 L528.3,487.9 L527.5,487.7 L526.8,492.0 L526.0,495.3 L525.1,494.4 L524.3,494.8 L523.5,501.5 L522.6,500.8 L521.9,492.9 L521.1,486.7 L520.4,486.7 L519.6,487.3 L518.9,486.8 L518.1,492.4 L517.2,491.2 L516.2,494.6 L515.3,500.7 L514.2,483.3 L513.4,484.9 L512.7,486.2 L511.9,487.8 L511.1,492.4 L510.3,497.4 L509.7,493.9 L509.1,497.1 L508.4,495.6 L507.6,494.9 L506.9,502.0 L505.8,484.4 L505.0,484.1 L504.1,493.8 L503.2,489.4 L502.4,490.1 L501.5,490.6 L500.5,497.9 L499.6,497.4 L498.8,492.5 L498.1,488.2 L497.3,485.9 L496.2,493.5 L495.1,502.0 L494.2,492.8 L493.4,494.9 L492.6,485.6 L491.9,478.6 L491.1,475.3 L490.2,490.1 L489.4,500.1 L488.5,492.4 L487.7,485.6 L486.8,485.5 L485.9,486.0 L485.0,488.6 L484.1,488.2 L483.2,491.4 L482.4,485.4 L481.5,481.4 L480.4,488.6 L479.3,502.0 L478.5,495.9 L477.6,487.0 L477.1,490.5 L476.5,498.0 L475.7,488.6 L475.0,490.7 L474.2,485.2 L473.4,489.7 L472.5,499.9 L471.6,479.9 L470.8,470.7 L469.7,471.6 L468.6,476.1 L467.8,478.0 L467.1,487.3 L466.3,488.5 L465.5,491.6 L464.6,498.4 L463.8,489.7 L462.9,484.2 L461.8,493.7 L460.7,474.7 L459.6,456.1 L458.8,462.0 L457.9,467.2 L457.1,474.2 L456.2,482.0 L455.3,483.5 L454.3,485.2 L453.4,491.8 L452.8,494.4 L452.2,501.3 L451.1,498.0 L450.0,490.9 L449.1,489.6 L448.3,488.4 L447.5,492.4 L446.6,495.0 L445.8,474.8 L444.9,458.0 L444.0,463.1 L443.2,472.8 L442.4,472.6 L441.5,474.3 L440.7,467.4 L439.9,468.3 L439.0,471.1 L438.2,477.2 L437.4,481.0 L436.5,488.4 L435.7,494.2 L434.7,467.7 L433.7,448.9 L432.9,459.1 L432.2,473.1 L431.4,485.6 L430.5,482.5 L429.7,482.8 L428.6,470.3 L427.5,460.7 L426.7,464.3 L426.0,467.5 L425.2,471.5 L424.4,470.9 L423.5,477.7 L422.9,467.6 L422.4,460.4 L421.5,470.0 L420.7,483.0 L419.9,472.3 L419.2,466.9 L418.4,458.6 L417.6,476.9 L416.8,497.6 L416.2,499.6 L415.6,496.4 L414.9,485.8 L414.1,472.7 L413.4,459.7 L412.3,490.9 L411.5,485.5 L410.8,476.2 L410.0,473.1 L409.0,474.3 L408.0,477.2 L406.9,480.5 L405.8,484.7 L404.9,479.7 L404.1,484.8 L403.2,482.7 L402.4,482.2 L401.3,464.3 L400.2,450.6 L399.4,450.9 L398.7,451.5 L397.9,452.4 L396.8,478.4 L396.0,475.1 L395.1,477.8 L394.6,493.9 L394.0,510.2 L393.1,508.9 L392.3,516.3 L391.4,502.7 L390.4,498.8 L389.5,496.0 L388.6,471.8 L387.8,449.4 L387.2,466.2 L386.6,484.5 L385.9,492.9 L385.1,492.5 L384.4,502.6 L383.5,478.7 L382.7,459.3 L381.9,468.3 L381.0,482.0 L380.1,490.1 L379.3,496.7 L378.4,490.8 L377.4,480.2 L376.5,471.6 L375.6,482.4 L374.8,486.4 L373.9,480.5 L372.9,477.4 L372.0,473.4 L371.4,474.4 L370.9,475.4 L370.1,482.0 L369.4,489.7 L368.6,499.7 L367.8,487.4 L366.9,487.0 L366.0,493.0 L365.2,500.0 L364.4,495.9 L363.5,497.2 L362.7,497.9 L361.9,500.8 L361.0,497.2 L360.2,499.1 L359.4,503.9 L358.5,500.0 L357.7,485.6 L357.0,466.9 L356.2,452.0 L355.3,455.7 L354.3,461.4 L353.4,465.2 L352.5,479.9 L351.7,492.9 L350.6,493.1 L349.5,489.9 L348.9,483.0 L348.3,476.5 L347.2,478.1 L346.1,485.8 L345.3,484.1 L344.6,479.3 L343.8,477.5 L342.7,480.1 L341.6,491.3 L340.8,479.5 L340.1,475.7 L339.3,470.4 L338.8,474.9 L338.2,477.8 L337.4,482.9 L336.7,482.7 L335.9,491.9 L335.0,489.1 L334.0,485.1 L333.1,493.7 L332.2,476.8 L331.4,472.9 L330.3,452.2 L329.2,450.7 L328.1,451.3 L327.2,456.5 L326.4,460.6 L325.5,455.4 L324.7,451.6 L323.9,459.1 L323.0,471.4 L322.1,464.0 L321.1,458.1 L320.2,453.8 L319.4,452.6 L318.5,451.9 L317.6,451.5 L316.8,451.8 L316.0,455.8 L315.1,460.1 L314.2,459.2 L313.2,456.1 L312.3,455.9 L311.4,454.8 L310.5,454.9 L309.6,452.7 L308.7,453.4 L307.8,452.9 L307.0,455.2 L306.3,458.1 L305.5,464.2 L304.4,458.0 L303.3,456.0 L302.4,455.5 L301.6,454.4 L300.8,456.3 L299.9,455.0 L299.1,453.1 L298.4,451.0 L297.6,448.6 L296.9,448.8 L296.1,448.8 L295.4,449.9 L294.6,451.0 L293.9,451.1 L293.1,453.3 L292.2,452.6 L291.3,454.3 L290.4,454.7 L289.5,455.2 L288.6,455.5 L287.8,452.4 L287.0,451.8 L286.1,449.3 L285.3,448.2 L284.5,445.5 L283.8,443.2 L283.0,441.0Z"/>
  </defs>
  <rect x="283" y="203" width="852" height="315" fill="#000"/>
  <rect x="539" y="203" width="340" height="315" fill="#666"/>
  <g clip-path="url(#c0)">
    <g clip-path="url(#cl)"><use href="#w0" fill="#00ff00"/></g>
    <g clip-path="url(#cr)"><use href="#w0" fill="#00ff00"/></g>
    <g clip-path="url(#cin)"><use href="#w0" fill="#66ff66"/></g>
  </g>
  <g clip-path="url(#c1)">
    <g clip-path="url(#cl)"><use href="#w1" fill="#00ff00"/></g>
    <g clip-path="url(#cr)"><use href="#w1" fill="#00ff00"/></g>
    <g clip-path="url(#cin)"><use href="#w1" fill="#66ff66"/></g>
  </g>
  <rect x="283" y="359" width="852" height="2" fill="#fff"/>
  <rect x="538" y="203" width="1" height="315" fill="#fff"/>
  <rect x="879" y="203" width="1" height="315" fill="#fff"/>
  <path d="M283.5,203V518" stroke="#d4c400" stroke-width="1" stroke-dasharray="1,1"/>
</svg>
<div class="a" style="left:291px;top:211px;font-size:12px;line-height:13px;color:#fff">Channel 0</div>
<div class="a" style="left:291px;top:368px;font-size:12px;line-height:13px;color:#fff">Channel 1</div>

<!-- scrollbar -->
<div class="a" style="left:283px;top:541px;width:852px;height:17px;background:#e6e6e6;border:1px solid #c4c4c4"></div>

<!-- group box -->
<div class="a" style="left:283px;top:574px;width:852px;height:87px;border:1px solid #dcdcdc"></div>
<div class="lbl" style="left:289px;top:567px;background:#f0f0f0;padding:0 3px">选择区域</div>

<div class="lbl" style="left:302px;top:595px">开始位置</div>
<div class="inp" style="left:373px;top:591px;width:114px">77.700</div>
<div class="lbl" style="left:495px;top:595px">秒</div>
<div class="lbl" style="left:302px;top:626px">播放位置</div>
<div class="inp" style="left:373px;top:622px;width:114px">0.000</div>
<div class="lbl" style="left:495px;top:626px">秒</div>

<div class="lbl" style="left:587px;top:595px">结束位置</div>
<div class="inp" style="left:658px;top:591px;width:114px">181.300</div>
<div class="lbl" style="left:781px;top:595px">秒</div>
<div class="lbl" style="left:587px;top:626px">总长度</div>
<div class="lbl" style="left:658px;top:626px;width:110px;text-align:right">259.000</div>
<div class="lbl" style="left:781px;top:626px">秒</div>

<div class="lbl" style="left:882px;top:595px">持续长度</div>
<div class="inp" style="left:954px;top:591px;width:114px">103.600</div>
<div class="lbl" style="left:1075px;top:595px">秒</div>

<!-- status bar -->
<div class="a" style="left:269px;top:691px;width:881px;height:1px;background:#d7d7d7"></div>
<svg style="left:1130px;top:690px" width="20" height="20">
  <g fill="#fff"><rect x="17" y="11" width="2" height="2"/><rect x="13" y="15" width="2" height="2"/><rect x="17" y="15" width="2" height="2"/><rect x="9" y="19" width="2" height="2"/><rect x="13" y="19" width="2" height="2"/><rect x="17" y="19" width="2" height="2"/></g>
  <g fill="#999"><rect x="16" y="10" width="2" height="2"/><rect x="12" y="14" width="2" height="2"/><rect x="16" y="14" width="2" height="2"/><rect x="8" y="18" width="2" height="2"/><rect x="12" y="18" width="2" height="2"/><rect x="16" y="18" width="2" height="2"/></g>
</svg>
</body></html>
